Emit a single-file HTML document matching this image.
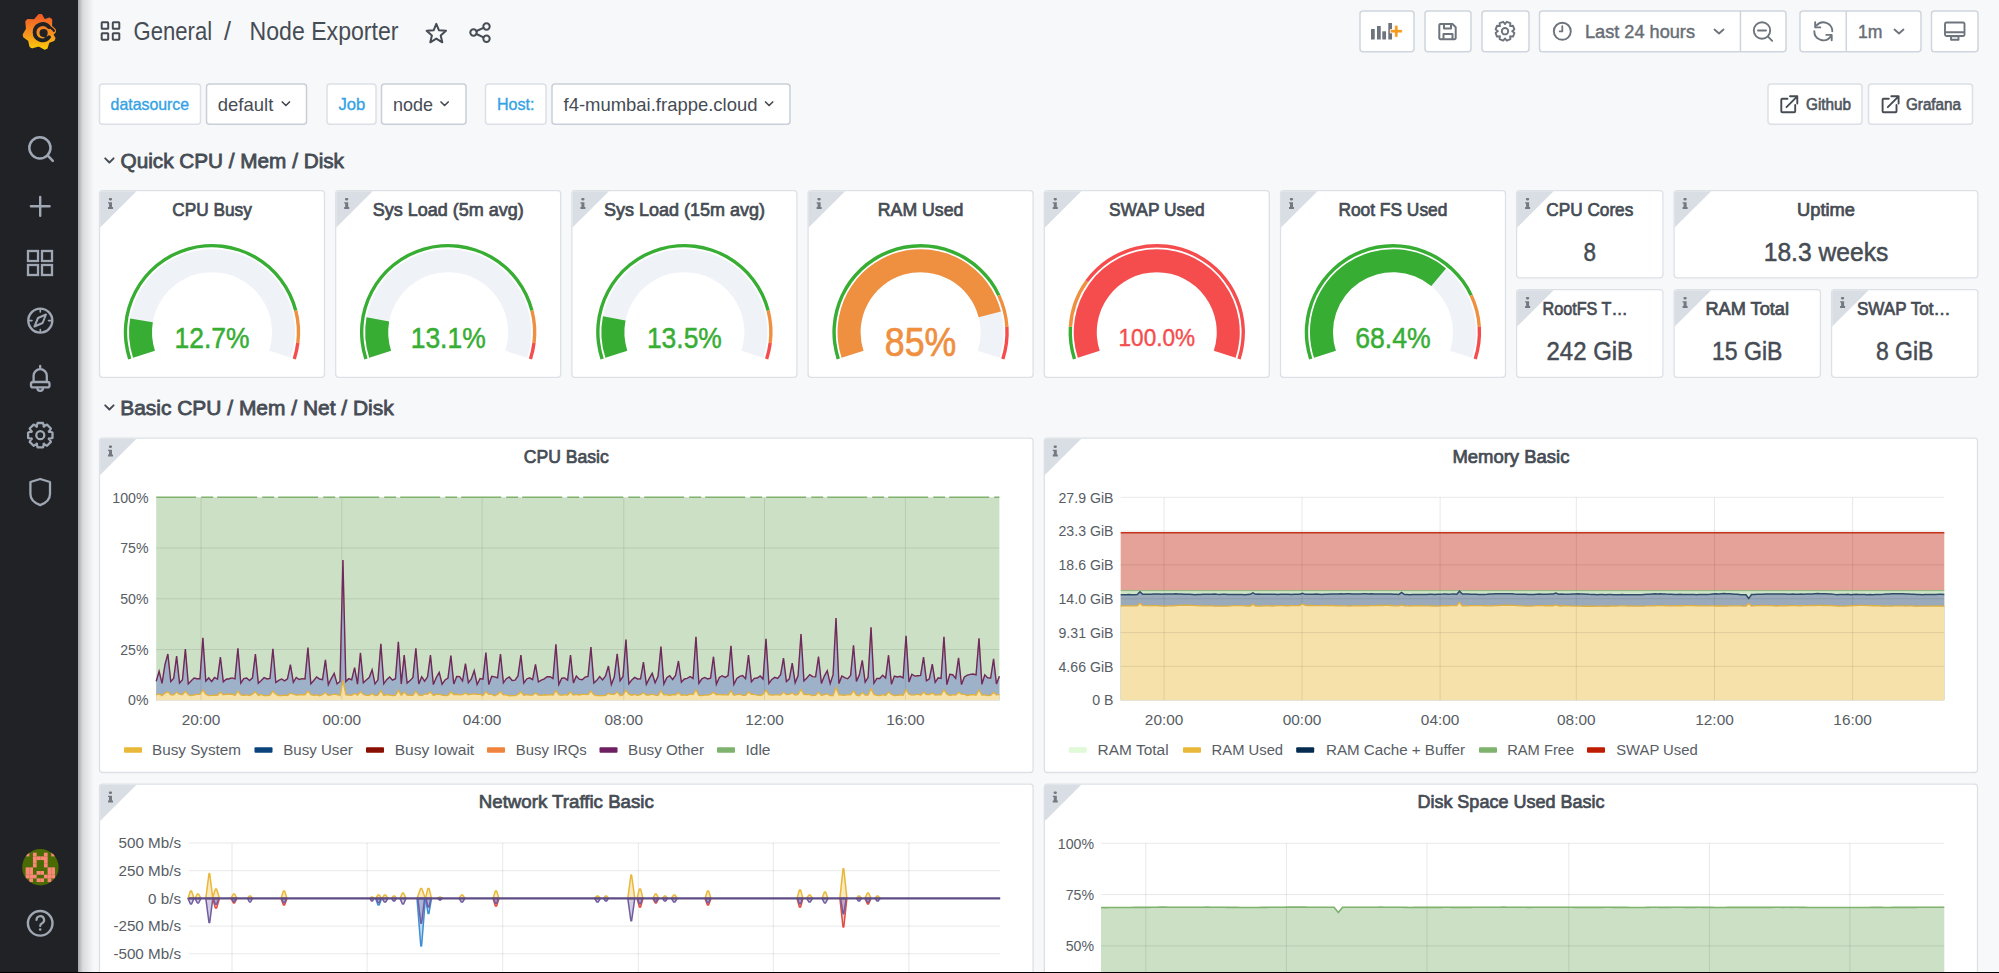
<!DOCTYPE html><html><head><meta charset="utf-8"><style>
html,body{margin:0;padding:0;width:1999px;height:973px;overflow:hidden;background:#f7f8fa;}
svg{position:absolute;left:0;top:0;font-family:"Liberation Sans",sans-serif;}
text{font-family:"Liberation Sans",sans-serif;}
</style></head><body>
<svg width="1999" height="973" viewBox="0 0 1999 973">
<defs><linearGradient id="sh" x1="0" x2="1" y1="0" y2="0"><stop offset="0" stop-color="#000" stop-opacity="0.33"/><stop offset="0.3" stop-color="#000" stop-opacity="0.12"/><stop offset="1" stop-color="#000" stop-opacity="0"/></linearGradient><linearGradient id="logo" x1="0" x2="0" y1="0" y2="1"><stop offset="0" stop-color="#f05a28"/><stop offset="0.55" stop-color="#f7911e"/><stop offset="1" stop-color="#fbca0a"/></linearGradient></defs>
<rect x="0" y="0" width="78" height="973" fill="#202226"/>
<rect x="78" y="0" width="16" height="973" fill="url(#sh)"/>
<path d="M26.10 21.58 L27.75 19.80 L34.50 20.12 L39.04 14.74 L41.51 14.84 L44.31 19.96 L49.60 18.28 L51.47 19.81 L51.28 26.04 L54.96 29.57 L55.20 31.74 L52.72 34.57 L54.69 38.25 L53.73 40.29 L48.64 42.16 L46.82 48.04 L44.57 48.89 L38.57 45.66 L32.30 47.59 L30.25 46.43 L28.84 40.22 L23.96 36.80 L23.50 34.58 L26.78 28.84Z" fill="url(#logo)" stroke="url(#logo)" stroke-width="1.6" stroke-linejoin="round"/>
<path d="M48.90 26.99 A8.1 8.1 0 0 0 34.60 32.20 A8.1 8.1 0 0 0 49.08 37.19" fill="none" stroke="#202226" stroke-width="3.8" stroke-linecap="round"/>
<polyline points="48.90,26.99 49.59,27.22 50.27,27.52 50.94,27.89 51.60,28.33 52.23,28.85 52.83,29.44 53.40,30.10 53.92,30.82" fill="none" stroke="#202226" stroke-width="2.2" stroke-linecap="round"/>
<circle cx="43.6" cy="33.1" r="4.1" fill="#202226"/>
<path d="M44.5 35.5 L46.8 38.6" stroke="#202226" stroke-width="2.4" stroke-linecap="round"/>
<path d="M 29.3 147.8 a 10.6 10.6 0 1 0 21.2 0 a 10.6 10.6 0 1 0 -21.2 0 M 47.8 155.6 L 52.8 160.8" fill="none" stroke="#9fa7b3" stroke-width="2.5" stroke-linecap="round" stroke-linejoin="round" />
<path d="M 40.2 197 V 215.7 M 30.9 206.3 H 49.6" fill="none" stroke="#9fa7b3" stroke-width="2.4" stroke-linecap="round" stroke-linejoin="round" />
<rect x="28" y="251" width="10" height="10" fill="none" stroke="#9fa7b3" stroke-width="2.3"/>
<rect x="42" y="251" width="10" height="10" fill="none" stroke="#9fa7b3" stroke-width="2.3"/>
<rect x="28" y="265" width="10" height="10" fill="none" stroke="#9fa7b3" stroke-width="2.3"/>
<rect x="42" y="265" width="10" height="10" fill="none" stroke="#9fa7b3" stroke-width="2.3"/>
<circle cx="40.3" cy="320.6" r="12" fill="none" stroke="#9fa7b3" stroke-width="2.4"/>
<path d="M 46 314.5 L 42.6 323 L 34.5 326.5 L 38 318 Z" fill="none" stroke="#9fa7b3" stroke-width="2.0" stroke-linecap="round" stroke-linejoin="round" />
<path d="M 40.3 309.5 v2.5 M 40.3 329.5 v2.5 M 29.5 320.6 h2.5 M 48.5 320.6 h2.5" fill="none" stroke="#9fa7b3" stroke-width="1.6" stroke-linecap="round" stroke-linejoin="round" />
<path d="M 40.2 366 v1.8 M 33.6 382 V 375.8 a 6.6 6.6 0 0 1 13.2 0 V 382 M 37.4 388 a 2.8 2.8 0 0 0 5.6 0" fill="none" stroke="#9fa7b3" stroke-width="2.3" stroke-linecap="round" stroke-linejoin="round" />
<rect x="31" y="382" width="18.5" height="5.4" rx="2" fill="none" stroke="#9fa7b3" stroke-width="2.3"/>
<path d="M52.5 432.5 L52.5 437.9 L48.8 439.0 L49.0 438.5 L50.9 441.9 L47.0 445.8 L43.6 443.9 L44.1 443.7 L43.0 447.4 L37.6 447.4 L36.5 443.7 L37.0 443.9 L33.6 445.8 L29.7 441.9 L31.6 438.5 L31.8 439.0 L28.1 437.9 L28.1 432.5 L31.8 431.4 L31.6 431.9 L29.7 428.5 L33.6 424.6 L37.0 426.5 L36.5 426.7 L37.6 423.0 L43.0 423.0 L44.1 426.7 L43.6 426.5 L47.0 424.6 L50.9 428.5 L49.0 431.9 L48.8 431.4Z" fill="none" stroke="#9fa7b3" stroke-width="2.3" stroke-linejoin="round"/>
<circle cx="40.3" cy="435.2" r="4" fill="none" stroke="#9fa7b3" stroke-width="2.3"/>
<path d="M 40.2 479 L 50 482 V 494 Q 50 501.5 40.2 505.2 Q 30.4 501.5 30.4 494 V 482 Z" fill="none" stroke="#9fa7b3" stroke-width="2.3" stroke-linecap="round" stroke-linejoin="round" />
<clipPath id="avc"><circle cx="40.4" cy="867.2" r="18.2"/></clipPath>
<g clip-path="url(#avc)"><rect x="21" y="848" width="38" height="38" fill="#4a6a04"/>
<rect x="25.61" y="852.69" width="3.72" height="3.72" fill="#fa8878"/>
<rect x="32.94" y="852.69" width="3.72" height="3.72" fill="#fa8878"/>
<rect x="43.95" y="852.69" width="3.72" height="3.72" fill="#fa8878"/>
<rect x="51.28" y="852.69" width="3.72" height="3.72" fill="#fa8878"/>
<rect x="32.94" y="856.36" width="3.72" height="3.72" fill="#fa8878"/>
<rect x="36.61" y="856.36" width="3.72" height="3.72" fill="#fa8878"/>
<rect x="40.28" y="856.36" width="3.72" height="3.72" fill="#fa8878"/>
<rect x="43.95" y="856.36" width="3.72" height="3.72" fill="#fa8878"/>
<rect x="32.94" y="860.02" width="3.72" height="3.72" fill="#fa8878"/>
<rect x="43.95" y="860.02" width="3.72" height="3.72" fill="#fa8878"/>
<rect x="32.94" y="863.69" width="3.72" height="3.72" fill="#fa8878"/>
<rect x="43.95" y="863.69" width="3.72" height="3.72" fill="#fa8878"/>
<rect x="25.61" y="867.36" width="3.72" height="3.72" fill="#fa8878"/>
<rect x="29.28" y="867.36" width="3.72" height="3.72" fill="#fa8878"/>
<rect x="47.62" y="867.36" width="3.72" height="3.72" fill="#fa8878"/>
<rect x="51.28" y="867.36" width="3.72" height="3.72" fill="#fa8878"/>
<rect x="25.61" y="871.03" width="3.72" height="3.72" fill="#fa8878"/>
<rect x="29.28" y="871.03" width="3.72" height="3.72" fill="#fa8878"/>
<rect x="36.61" y="871.03" width="3.72" height="3.72" fill="#fa8878"/>
<rect x="40.28" y="871.03" width="3.72" height="3.72" fill="#fa8878"/>
<rect x="47.62" y="871.03" width="3.72" height="3.72" fill="#fa8878"/>
<rect x="51.28" y="871.03" width="3.72" height="3.72" fill="#fa8878"/>
<rect x="25.61" y="874.69" width="3.72" height="3.72" fill="#fa8878"/>
<rect x="29.28" y="874.69" width="3.72" height="3.72" fill="#fa8878"/>
<rect x="32.94" y="874.69" width="3.72" height="3.72" fill="#fa8878"/>
<rect x="43.95" y="874.69" width="3.72" height="3.72" fill="#fa8878"/>
<rect x="47.62" y="874.69" width="3.72" height="3.72" fill="#fa8878"/>
<rect x="51.28" y="874.69" width="3.72" height="3.72" fill="#fa8878"/>
<rect x="29.28" y="878.36" width="3.72" height="3.72" fill="#fa8878"/>
<rect x="36.61" y="878.36" width="3.72" height="3.72" fill="#fa8878"/>
<rect x="40.28" y="878.36" width="3.72" height="3.72" fill="#fa8878"/>
<rect x="47.62" y="878.36" width="3.72" height="3.72" fill="#fa8878"/>
</g>
<circle cx="40.2" cy="923.3" r="12.3" fill="none" stroke="#9fa7b3" stroke-width="2.4"/>
<path d="M 36.5 920 a 3.8 3.8 0 1 1 5.6 3.3 q -1.9 1 -1.9 2.7" fill="none" stroke="#9fa7b3" stroke-width="2.2" stroke-linecap="round" stroke-linejoin="round" />
<circle cx="40.2" cy="929.5" r="1.3" fill="#9fa7b3"/>
<rect x="101.7" y="22.3" width="6.5" height="6.5" rx="0.6" fill="none" stroke="#464c54" stroke-width="2"/>
<rect x="112.8" y="22.3" width="6.5" height="6.5" rx="0.6" fill="none" stroke="#464c54" stroke-width="2"/>
<rect x="101.7" y="33.2" width="6.5" height="6.5" rx="0.6" fill="none" stroke="#464c54" stroke-width="2"/>
<rect x="112.8" y="33.2" width="6.5" height="6.5" rx="0.6" fill="none" stroke="#464c54" stroke-width="2"/>
<text x="133.6" y="40" font-size="25.2" font-weight="normal" fill="#464c54" text-anchor="start" textLength="78.5" lengthAdjust="spacingAndGlyphs" >General</text>
<text x="224" y="40" font-size="25.2" font-weight="normal" fill="#464c54" text-anchor="start" >/</text>
<text x="249.5" y="40" font-size="25.2" font-weight="normal" fill="#464c54" text-anchor="start" textLength="149" lengthAdjust="spacingAndGlyphs" >Node Exporter</text>
<path d="M436.3 23.8 L439.0 30.3 L446.0 30.8 L440.7 35.4 L442.3 42.3 L436.3 38.6 L430.3 42.3 L431.9 35.4 L426.6 30.8 L433.6 30.3Z" fill="none" stroke="#464c54" stroke-width="2" stroke-linejoin="round"/>
<circle cx="486.5" cy="26.5" r="3.2" fill="none" stroke="#464c54" stroke-width="2"/>
<circle cx="473.5" cy="32.5" r="3.2" fill="none" stroke="#464c54" stroke-width="2"/>
<circle cx="486.5" cy="38.8" r="3.2" fill="none" stroke="#464c54" stroke-width="2"/>
<path d="M 476.5 31 L 483.5 27.8 M 476.5 34 L 483.5 37.4" fill="none" stroke="#464c54" stroke-width="2" stroke-linecap="round" stroke-linejoin="round" />
<rect x="1360" y="11" width="54" height="40.8" rx="3" fill="#fff" stroke="#cfd5de" stroke-width="1.5"/>
<rect x="1425" y="11" width="46" height="40.8" rx="3" fill="#fff" stroke="#cfd5de" stroke-width="1.5"/>
<rect x="1482" y="11" width="47" height="40.8" rx="3" fill="#fff" stroke="#cfd5de" stroke-width="1.5"/>
<rect x="1539.5" y="11" width="246.5" height="40.8" rx="3" fill="#fff" stroke="#cfd5de" stroke-width="1.5"/>
<rect x="1800" y="11" width="121" height="40.8" rx="3" fill="#fff" stroke="#cfd5de" stroke-width="1.5"/>
<rect x="1931.5" y="11" width="46.5" height="40.8" rx="3" fill="#fff" stroke="#cfd5de" stroke-width="1.5"/>
<rect x="1739.7" y="11" width="1.5" height="40.8" fill="#cfd5de"/>
<rect x="1845.5" y="11" width="1.5" height="40.8" fill="#cfd5de"/>
<rect x="1371" y="29.0" width="3.75" height="10.5" fill="#6e747d"/>
<rect x="1377" y="26.0" width="3.75" height="13.5" fill="#6e747d"/>
<rect x="1382.3" y="31.3" width="3.75" height="8.2" fill="#6e747d"/>
<rect x="1388.3" y="23.0" width="3.75" height="16.5" fill="#6e747d"/>
<path d="M1390.3 29.5 h4.3 v-4.3 h3.4 v4.3 h4.3 v3.4 h-4.3 v4.3 h-3.4 v-4.3 h-4.3 z" fill="#f59a1b" stroke="#fff" stroke-width="0.8"/>
<path d="M 1440.5 24 h12 l 3.2 3.2 v 10.8 a1.2 1.2 0 0 1 -1.2 1.2 h-14 a1.2 1.2 0 0 1 -1.2 -1.2 v-12.8 a1.2 1.2 0 0 1 1.2 -1.2 z M 1444 24 v4.5 h7 v-4.5 M 1443.5 39 v-5 h9 v5" fill="none" stroke="#6e747d" stroke-width="2" stroke-linecap="round" stroke-linejoin="round" />
<path d="M1514.4 33.0 L1513.0 36.6 L1510.1 36.3 L1510.1 36.3 L1510.4 39.2 L1506.8 40.6 L1504.9 38.4 L1505.1 38.4 L1503.2 40.6 L1499.6 39.2 L1499.9 36.3 L1499.9 36.3 L1497.0 36.6 L1495.6 33.0 L1497.8 31.1 L1497.8 31.3 L1495.6 29.4 L1497.0 25.8 L1499.9 26.1 L1499.9 26.1 L1499.6 23.2 L1503.2 21.8 L1505.1 24.0 L1504.9 24.0 L1506.8 21.8 L1510.4 23.2 L1510.1 26.1 L1510.1 26.1 L1513.0 25.8 L1514.4 29.4 L1512.2 31.3 L1512.2 31.1Z" fill="none" stroke="#6e747d" stroke-width="1.9" stroke-linejoin="round"/>
<circle cx="1505" cy="31.2" r="3.2" fill="none" stroke="#6e747d" stroke-width="1.9"/>
<circle cx="1562.3" cy="31.3" r="8.5" fill="none" stroke="#6e747d" stroke-width="1.9"/>
<path d="M 1562.3 26.2 v 5.2 h -2.6" fill="none" stroke="#6e747d" stroke-width="1.8" stroke-linecap="round" stroke-linejoin="round" />
<text x="1585" y="37.9" font-size="18.8" font-weight="normal" fill="#686e76" text-anchor="start" textLength="110" lengthAdjust="spacingAndGlyphs"  stroke="#686e76" stroke-width="0.45">Last 24 hours</text>
<path d="M 1714.5 29.5 l 4.5 4 l 4.5 -4" fill="none" stroke="#6e747d" stroke-width="1.8" stroke-linecap="round" stroke-linejoin="round" />
<circle cx="1762" cy="30.5" r="8.2" fill="none" stroke="#6e747d" stroke-width="1.9"/>
<path d="M 1758 30.5 h 8 M 1768 36.6 l 4.2 4.2" fill="none" stroke="#6e747d" stroke-width="1.9" stroke-linecap="round" stroke-linejoin="round" />
<path d="M 1816.6 25.3 A 9 9 0 0 1 1832.3 31.2 M 1814.3 31.2 A 9 9 0 0 0 1830.8 36.2" fill="none" stroke="#6e747d" stroke-width="1.9" stroke-linecap="round" stroke-linejoin="round" />
<path d="M 1815.2 22.3 V 27.4 H 1820.3 M 1826.3 34.9 H 1831.7 V 40.3" fill="none" stroke="#6e747d" stroke-width="1.9" stroke-linecap="round" stroke-linejoin="round" />
<text x="1858" y="37.9" font-size="18.8" font-weight="normal" fill="#686e76" text-anchor="start" textLength="24.5" lengthAdjust="spacingAndGlyphs"  stroke="#686e76" stroke-width="0.45">1m</text>
<path d="M 1894.5 29.5 l 4.5 4 l 4.5 -4" fill="none" stroke="#6e747d" stroke-width="1.8" stroke-linecap="round" stroke-linejoin="round" />
<path d="M 1946.5 22.5 h 16.5 a1.5 1.5 0 0 1 1.5 1.5 v 10.5 a1.5 1.5 0 0 1 -1.5 1.5 h-16.5 a1.5 1.5 0 0 1 -1.5 -1.5 v-10.5 a1.5 1.5 0 0 1 1.5 -1.5 z M 1945.5 32.2 h 18.5 M 1951 39.7 h 7.5 v-3.5 h-7.5 z" fill="none" stroke="#6e747d" stroke-width="1.9" stroke-linecap="round" stroke-linejoin="round" />
<rect x="99.5" y="84" width="101.0" height="40.2" rx="3" fill="#fff" stroke="#dce0e6" stroke-width="1.5"/>
<rect x="206.5" y="84" width="100.0" height="40.2" rx="3" fill="#fff" stroke="#c9cfd8" stroke-width="1.5"/>
<rect x="327" y="84" width="49" height="40.2" rx="3" fill="#fff" stroke="#dce0e6" stroke-width="1.5"/>
<rect x="381.5" y="84" width="84.5" height="40.2" rx="3" fill="#fff" stroke="#c9cfd8" stroke-width="1.5"/>
<rect x="485.5" y="84" width="60.5" height="40.2" rx="3" fill="#fff" stroke="#dce0e6" stroke-width="1.5"/>
<rect x="552" y="84" width="238" height="40.2" rx="3" fill="#fff" stroke="#c9cfd8" stroke-width="1.5"/>
<text x="110.6" y="110" font-size="16.5" font-weight="normal" fill="#33a2e5" text-anchor="start" textLength="78.5" lengthAdjust="spacingAndGlyphs"  stroke="#33a2e5" stroke-width="0.35">datasource</text>
<text x="217.8" y="110.5" font-size="19" font-weight="normal" fill="#464c54" text-anchor="start" textLength="55.5" lengthAdjust="spacingAndGlyphs" >default</text>
<path d="M 282.3 102 l 3.6 3.5 l 3.6 -3.5" fill="none" stroke="#464c54" stroke-width="1.7" stroke-linecap="round" stroke-linejoin="round" />
<text x="338.5" y="110" font-size="16.5" font-weight="normal" fill="#33a2e5" text-anchor="start" textLength="26.8" lengthAdjust="spacingAndGlyphs"  stroke="#33a2e5" stroke-width="0.35">Job</text>
<text x="393" y="110.5" font-size="19" font-weight="normal" fill="#464c54" text-anchor="start" textLength="40" lengthAdjust="spacingAndGlyphs" >node</text>
<path d="M 441 102 l 3.6 3.5 l 3.6 -3.5" fill="none" stroke="#464c54" stroke-width="1.7" stroke-linecap="round" stroke-linejoin="round" />
<text x="497" y="110" font-size="16.5" font-weight="normal" fill="#33a2e5" text-anchor="start" textLength="37.5" lengthAdjust="spacingAndGlyphs"  stroke="#33a2e5" stroke-width="0.35">Host:</text>
<text x="563.5" y="110.5" font-size="19" font-weight="normal" fill="#464c54" text-anchor="start" textLength="194" lengthAdjust="spacingAndGlyphs" >f4-mumbai.frappe.cloud</text>
<path d="M 765.5 102 l 3.6 3.5 l 3.6 -3.5" fill="none" stroke="#464c54" stroke-width="1.7" stroke-linecap="round" stroke-linejoin="round" />
<rect x="1768" y="84" width="94" height="40.2" rx="3" fill="#fff" stroke="#dce0e6" stroke-width="1.5"/>
<rect x="1868.5" y="84" width="104.0" height="40.2" rx="3" fill="#fff" stroke="#dce0e6" stroke-width="1.5"/>
<path d="M 1787.5 98.8 H 1782.3 a1 1 0 0 0 -1 1 V 111.3 a1 1 0 0 0 1 1 H 1794.2 a1 1 0 0 0 1 -1 V 105 M 1786.5 107.2 L 1797.0 96.7 M 1790.0 96.3 H 1797.3 V 103.5" fill="none" stroke="#464c54" stroke-width="1.9" stroke-linecap="round" stroke-linejoin="round" />
<path d="M 1888.8 98.8 H 1883.6 a1 1 0 0 0 -1 1 V 111.3 a1 1 0 0 0 1 1 H 1895.5 a1 1 0 0 0 1 -1 V 105 M 1887.8 107.2 L 1898.3 96.7 M 1891.3 96.3 H 1898.6 V 103.5" fill="none" stroke="#464c54" stroke-width="1.9" stroke-linecap="round" stroke-linejoin="round" />
<text x="1806" y="110" font-size="16.5" font-weight="normal" fill="#50565e" text-anchor="start" textLength="45" lengthAdjust="spacingAndGlyphs"  stroke="#50565e" stroke-width="0.64">Github</text>
<text x="1906" y="110" font-size="16.5" font-weight="normal" fill="#50565e" text-anchor="start" textLength="55" lengthAdjust="spacingAndGlyphs"  stroke="#50565e" stroke-width="0.64">Grafana</text>
<path d="M 105.2 158.3 l 4.2 4.2 l 4.2 -4.2" fill="none" stroke="#464c54" stroke-width="1.9" stroke-linecap="round" stroke-linejoin="round" />
<text x="120.5" y="167.5" font-size="20.6" font-weight="normal" fill="#464c54" text-anchor="start" textLength="223.5" lengthAdjust="spacingAndGlyphs"  stroke="#464c54" stroke-width="0.80">Quick CPU / Mem / Disk</text>
<path d="M 105.2 405.3 l 4.2 4.2 l 4.2 -4.2" fill="none" stroke="#464c54" stroke-width="1.9" stroke-linecap="round" stroke-linejoin="round" />
<text x="120.2" y="414.5" font-size="20.6" font-weight="normal" fill="#464c54" text-anchor="start" textLength="273.5" lengthAdjust="spacingAndGlyphs"  stroke="#464c54" stroke-width="0.80">Basic CPU / Mem / Net / Disk</text>
<rect x="99.5" y="190.7" width="225.0" height="186.6" rx="3" fill="#fff" stroke="#dde1e6" stroke-width="1.3"/>
<path d="M100.1 194.0 Q100.1 191.3 103.0 191.3 L136.5 191.3 L100.1 227.5 Z" fill="#d9dee5"/>
<rect x="108.8" y="198.0" width="3.3" height="2.4" rx="1.1" fill="#737881"/>
<path d="M108.0 202.2 H112.0 V206.9 H113.0 V208.9 H108.0 V206.9 H109.0 V203.5 H108.0 Z" fill="#737881"/>
<text x="212.0" y="215.8" font-size="18.4" font-weight="normal" fill="#464c54" text-anchor="middle" textLength="79.5" lengthAdjust="spacingAndGlyphs"  stroke="#464c54" stroke-width="0.72">CPU Busy</text>
<path d="M133.06 357.85 A83.0 83.0 0 1 1 290.93 357.85 L269.06 350.74 A60 60 0 1 0 154.93 350.74 Z" fill="#eff2f7"/>
<path d="M133.06 357.85 A83.0 83.0 0 0 1 130.12 318.60 L152.81 322.37 A60 60 0 0 0 154.93 350.74 Z" fill="#37ae33"/>
<path d="M128.11 359.46 A88.2 88.2 0 1 1 297.42 310.27 L294.13 311.11 A84.8 84.8 0 1 0 131.35 358.40 Z" fill="#37ae33"/>
<path d="M297.42 310.27 A88.2 88.2 0 0 1 299.50 343.25 L296.13 342.83 A84.8 84.8 0 0 0 294.13 311.11 Z" fill="#ef8f40"/>
<path d="M299.50 343.25 A88.2 88.2 0 0 1 295.88 359.46 L292.64 358.40 A84.8 84.8 0 0 0 296.13 342.83 Z" fill="#f54d4d"/>
<text x="212.0" y="348.0" font-size="29" font-weight="normal" fill="#37ae33" text-anchor="middle" textLength="75" lengthAdjust="spacingAndGlyphs"  stroke="#37ae33" stroke-width="0.50">12.7%</text>
<rect x="335.7" y="190.7" width="225.0" height="186.6" rx="3" fill="#fff" stroke="#dde1e6" stroke-width="1.3"/>
<path d="M336.3 194.0 Q336.3 191.3 339.2 191.3 L372.7 191.3 L336.3 227.5 Z" fill="#d9dee5"/>
<rect x="345.0" y="198.0" width="3.3" height="2.4" rx="1.1" fill="#737881"/>
<path d="M344.2 202.2 H348.2 V206.9 H349.2 V208.9 H344.2 V206.9 H345.2 V203.5 H344.2 Z" fill="#737881"/>
<text x="448.2" y="215.8" font-size="18.4" font-weight="normal" fill="#464c54" text-anchor="middle" textLength="151" lengthAdjust="spacingAndGlyphs"  stroke="#464c54" stroke-width="0.72">Sys Load (5m avg)</text>
<path d="M369.25 357.85 A83.0 83.0 0 1 1 527.12 357.85 L505.25 350.74 A60 60 0 1 0 391.12 350.74 Z" fill="#eff2f7"/>
<path d="M369.25 357.85 A83.0 83.0 0 0 1 366.52 317.37 L389.15 321.48 A60 60 0 0 0 391.12 350.74 Z" fill="#37ae33"/>
<path d="M364.30 359.46 A88.2 88.2 0 1 1 533.61 310.27 L530.32 311.11 A84.8 84.8 0 1 0 367.54 358.40 Z" fill="#37ae33"/>
<path d="M533.61 310.27 A88.2 88.2 0 0 1 535.69 343.25 L532.32 342.83 A84.8 84.8 0 0 0 530.32 311.11 Z" fill="#ef8f40"/>
<path d="M535.69 343.25 A88.2 88.2 0 0 1 532.07 359.46 L528.83 358.40 A84.8 84.8 0 0 0 532.32 342.83 Z" fill="#f54d4d"/>
<text x="448.2" y="348.0" font-size="29" font-weight="normal" fill="#37ae33" text-anchor="middle" textLength="75" lengthAdjust="spacingAndGlyphs"  stroke="#37ae33" stroke-width="0.50">13.1%</text>
<rect x="571.9" y="190.7" width="225.0" height="186.6" rx="3" fill="#fff" stroke="#dde1e6" stroke-width="1.3"/>
<path d="M572.5 194.0 Q572.5 191.3 575.4 191.3 L608.9 191.3 L572.5 227.5 Z" fill="#d9dee5"/>
<rect x="581.2" y="198.0" width="3.3" height="2.4" rx="1.1" fill="#737881"/>
<path d="M580.4 202.2 H584.4 V206.9 H585.4 V208.9 H580.4 V206.9 H581.4 V203.5 H580.4 Z" fill="#737881"/>
<text x="684.4" y="215.8" font-size="18.4" font-weight="normal" fill="#464c54" text-anchor="middle" textLength="161" lengthAdjust="spacingAndGlyphs"  stroke="#464c54" stroke-width="0.72">Sys Load (15m avg)</text>
<path d="M605.44 357.85 A83.0 83.0 0 1 1 763.31 357.85 L741.44 350.74 A60 60 0 1 0 627.31 350.74 Z" fill="#eff2f7"/>
<path d="M605.44 357.85 A83.0 83.0 0 0 1 602.94 316.14 L625.51 320.59 A60 60 0 0 0 627.31 350.74 Z" fill="#37ae33"/>
<path d="M600.49 359.46 A88.2 88.2 0 1 1 769.80 310.27 L766.51 311.11 A84.8 84.8 0 1 0 603.73 358.40 Z" fill="#37ae33"/>
<path d="M769.80 310.27 A88.2 88.2 0 0 1 771.88 343.25 L768.51 342.83 A84.8 84.8 0 0 0 766.51 311.11 Z" fill="#ef8f40"/>
<path d="M771.88 343.25 A88.2 88.2 0 0 1 768.26 359.46 L765.02 358.40 A84.8 84.8 0 0 0 768.51 342.83 Z" fill="#f54d4d"/>
<text x="684.4" y="348.0" font-size="29" font-weight="normal" fill="#37ae33" text-anchor="middle" textLength="75" lengthAdjust="spacingAndGlyphs"  stroke="#37ae33" stroke-width="0.50">13.5%</text>
<rect x="808.1" y="190.7" width="225.0" height="186.6" rx="3" fill="#fff" stroke="#dde1e6" stroke-width="1.3"/>
<path d="M808.7 194.0 Q808.7 191.3 811.6 191.3 L845.1 191.3 L808.7 227.5 Z" fill="#d9dee5"/>
<rect x="817.4" y="198.0" width="3.3" height="2.4" rx="1.1" fill="#737881"/>
<path d="M816.6 202.2 H820.6 V206.9 H821.6 V208.9 H816.6 V206.9 H817.6 V203.5 H816.6 Z" fill="#737881"/>
<text x="920.6" y="215.8" font-size="18.4" font-weight="normal" fill="#464c54" text-anchor="middle" textLength="85.5" lengthAdjust="spacingAndGlyphs"  stroke="#464c54" stroke-width="0.72">RAM Used</text>
<path d="M841.63 357.85 A83.0 83.0 0 1 1 999.50 357.85 L977.63 350.74 A60 60 0 1 0 863.50 350.74 Z" fill="#eff2f7"/>
<path d="M841.63 357.85 A83.0 83.0 0 1 1 1000.96 311.56 L978.68 317.28 A60 60 0 1 0 863.50 350.74 Z" fill="#ef8f40"/>
<path d="M836.68 359.46 A88.2 88.2 0 0 1 1000.37 294.65 L997.29 296.09 A84.8 84.8 0 0 0 839.92 358.40 Z" fill="#37ae33"/>
<path d="M1000.37 294.65 A88.2 88.2 0 0 1 1008.59 326.66 L1005.20 326.88 A84.8 84.8 0 0 0 997.29 296.09 Z" fill="#ef8f40"/>
<path d="M1008.59 326.66 A88.2 88.2 0 0 1 1004.45 359.46 L1001.21 358.40 A84.8 84.8 0 0 0 1005.20 326.88 Z" fill="#f54d4d"/>
<text x="920.6" y="356.0" font-size="41" font-weight="normal" fill="#ef8f40" text-anchor="middle" textLength="71.5" lengthAdjust="spacingAndGlyphs"  stroke="#ef8f40" stroke-width="0.71">85%</text>
<rect x="1044.3" y="190.7" width="225.0" height="186.6" rx="3" fill="#fff" stroke="#dde1e6" stroke-width="1.3"/>
<path d="M1044.9 194.0 Q1044.9 191.3 1047.8 191.3 L1081.3 191.3 L1044.9 227.5 Z" fill="#d9dee5"/>
<rect x="1053.6" y="198.0" width="3.3" height="2.4" rx="1.1" fill="#737881"/>
<path d="M1052.8 202.2 H1056.8 V206.9 H1057.8 V208.9 H1052.8 V206.9 H1053.8 V203.5 H1052.8 Z" fill="#737881"/>
<text x="1156.8" y="215.8" font-size="18.4" font-weight="normal" fill="#464c54" text-anchor="middle" textLength="95.5" lengthAdjust="spacingAndGlyphs"  stroke="#464c54" stroke-width="0.72">SWAP Used</text>
<path d="M1077.82 357.85 A83.0 83.0 0 1 1 1235.69 357.85 L1213.82 350.74 A60 60 0 1 0 1099.69 350.74 Z" fill="#eff2f7"/>
<path d="M1077.82 357.85 A83.0 83.0 0 1 1 1235.69 357.85 L1213.82 350.74 A60 60 0 1 0 1099.69 350.74 Z" fill="#f54d4d"/>
<path d="M1072.87 359.46 A88.2 88.2 0 0 1 1068.73 326.66 L1072.12 326.88 A84.8 84.8 0 0 0 1076.11 358.40 Z" fill="#37ae33"/>
<path d="M1068.73 326.66 A88.2 88.2 0 0 1 1085.40 280.36 L1088.15 282.36 A84.8 84.8 0 0 0 1072.12 326.88 Z" fill="#ef8f40"/>
<path d="M1085.40 280.36 A88.2 88.2 0 0 1 1240.64 359.46 L1237.40 358.40 A84.8 84.8 0 0 0 1088.15 282.36 Z" fill="#f54d4d"/>
<text x="1156.8" y="346.4" font-size="23.3" font-weight="normal" fill="#f54d4d" text-anchor="middle" textLength="76.5" lengthAdjust="spacingAndGlyphs"  stroke="#f54d4d" stroke-width="0.40">100.0%</text>
<rect x="1280.5" y="190.7" width="225.0" height="186.6" rx="3" fill="#fff" stroke="#dde1e6" stroke-width="1.3"/>
<path d="M1281.0 194.0 Q1281.0 191.3 1284.0 191.3 L1317.5 191.3 L1281.0 227.5 Z" fill="#d9dee5"/>
<rect x="1289.8" y="198.0" width="3.3" height="2.4" rx="1.1" fill="#737881"/>
<path d="M1289.0 202.2 H1293.0 V206.9 H1294.0 V208.9 H1289.0 V206.9 H1290.0 V203.5 H1289.0 Z" fill="#737881"/>
<text x="1392.9" y="215.8" font-size="18.4" font-weight="normal" fill="#464c54" text-anchor="middle" textLength="109" lengthAdjust="spacingAndGlyphs"  stroke="#464c54" stroke-width="0.72">Root FS Used</text>
<path d="M1314.01 357.85 A83.0 83.0 0 1 1 1471.88 357.85 L1450.01 350.74 A60 60 0 1 0 1335.88 350.74 Z" fill="#eff2f7"/>
<path d="M1314.01 357.85 A83.0 83.0 0 0 1 1446.01 268.38 L1431.31 286.07 A60 60 0 0 0 1335.88 350.74 Z" fill="#37ae33"/>
<path d="M1309.06 359.46 A88.2 88.2 0 0 1 1472.75 294.65 L1469.67 296.09 A84.8 84.8 0 0 0 1312.30 358.40 Z" fill="#37ae33"/>
<path d="M1472.75 294.65 A88.2 88.2 0 0 1 1480.97 326.66 L1477.58 326.88 A84.8 84.8 0 0 0 1469.67 296.09 Z" fill="#ef8f40"/>
<path d="M1480.97 326.66 A88.2 88.2 0 0 1 1476.83 359.46 L1473.59 358.40 A84.8 84.8 0 0 0 1477.58 326.88 Z" fill="#f54d4d"/>
<text x="1392.9" y="347.8" font-size="29" font-weight="normal" fill="#37ae33" text-anchor="middle" textLength="75.5" lengthAdjust="spacingAndGlyphs"  stroke="#37ae33" stroke-width="0.50">68.4%</text>
<rect x="1516.6" y="190.7" width="146.3" height="87.1" rx="3" fill="#fff" stroke="#dde1e6" stroke-width="1.3"/>
<path d="M1517.2 194.0 Q1517.2 191.3 1520.1 191.3 L1553.6 191.3 L1517.2 227.5 Z" fill="#d9dee5"/>
<rect x="1525.9" y="198.0" width="3.3" height="2.4" rx="1.1" fill="#737881"/>
<path d="M1525.1 202.2 H1529.1 V206.9 H1530.1 V208.9 H1525.1 V206.9 H1526.1 V203.5 H1525.1 Z" fill="#737881"/>
<text x="1589.8" y="215.8" font-size="18.4" font-weight="normal" fill="#464c54" text-anchor="middle" textLength="87" lengthAdjust="spacingAndGlyphs"  stroke="#464c54" stroke-width="0.72">CPU Cores</text>
<text x="1589.8" y="260.6" font-size="25.8" font-weight="normal" fill="#464c54" text-anchor="middle" textLength="12.5" lengthAdjust="spacingAndGlyphs"  stroke="#464c54" stroke-width="0.50">8</text>
<rect x="1674.1" y="190.7" width="303.7" height="87.1" rx="3" fill="#fff" stroke="#dde1e6" stroke-width="1.3"/>
<path d="M1674.7 194.0 Q1674.7 191.3 1677.6 191.3 L1711.1 191.3 L1674.7 227.5 Z" fill="#d9dee5"/>
<rect x="1683.4" y="198.0" width="3.3" height="2.4" rx="1.1" fill="#737881"/>
<path d="M1682.6 202.2 H1686.6 V206.9 H1687.6 V208.9 H1682.6 V206.9 H1683.6 V203.5 H1682.6 Z" fill="#737881"/>
<text x="1826.0" y="215.8" font-size="18.4" font-weight="normal" fill="#464c54" text-anchor="middle" textLength="58" lengthAdjust="spacingAndGlyphs"  stroke="#464c54" stroke-width="0.72">Uptime</text>
<text x="1826.0" y="260.6" font-size="25.8" font-weight="normal" fill="#464c54" text-anchor="middle" textLength="124.5" lengthAdjust="spacingAndGlyphs"  stroke="#464c54" stroke-width="0.50">18.3 weeks</text>
<rect x="1516.6" y="289.7" width="146.3" height="87.6" rx="3" fill="#fff" stroke="#dde1e6" stroke-width="1.3"/>
<path d="M1517.2 293.0 Q1517.2 290.3 1520.1 290.3 L1553.6 290.3 L1517.2 326.5 Z" fill="#d9dee5"/>
<rect x="1525.9" y="297.0" width="3.3" height="2.4" rx="1.1" fill="#737881"/>
<path d="M1525.1 301.2 H1529.1 V305.9 H1530.1 V307.9 H1525.1 V305.9 H1526.1 V302.5 H1525.1 Z" fill="#737881"/>
<text x="1585.1" y="314.8" font-size="18.4" font-weight="normal" fill="#464c54" text-anchor="middle" textLength="85" lengthAdjust="spacingAndGlyphs"  stroke="#464c54" stroke-width="0.72">RootFS T…</text>
<text x="1589.8" y="359.6" font-size="25.8" font-weight="normal" fill="#464c54" text-anchor="middle" textLength="86.5" lengthAdjust="spacingAndGlyphs"  stroke="#464c54" stroke-width="0.50">242 GiB</text>
<rect x="1674.1" y="289.7" width="146.3" height="87.6" rx="3" fill="#fff" stroke="#dde1e6" stroke-width="1.3"/>
<path d="M1674.7 293.0 Q1674.7 290.3 1677.6 290.3 L1711.1 290.3 L1674.7 326.5 Z" fill="#d9dee5"/>
<rect x="1683.4" y="297.0" width="3.3" height="2.4" rx="1.1" fill="#737881"/>
<path d="M1682.6 301.2 H1686.6 V305.9 H1687.6 V307.9 H1682.6 V305.9 H1683.6 V302.5 H1682.6 Z" fill="#737881"/>
<text x="1747.2" y="314.8" font-size="18.4" font-weight="normal" fill="#464c54" text-anchor="middle" textLength="83.5" lengthAdjust="spacingAndGlyphs"  stroke="#464c54" stroke-width="0.72">RAM Total</text>
<text x="1747.2" y="359.6" font-size="25.8" font-weight="normal" fill="#464c54" text-anchor="middle" textLength="70.5" lengthAdjust="spacingAndGlyphs"  stroke="#464c54" stroke-width="0.50">15 GiB</text>
<rect x="1831.6" y="289.7" width="146.3" height="87.6" rx="3" fill="#fff" stroke="#dde1e6" stroke-width="1.3"/>
<path d="M1832.2 293.0 Q1832.2 290.3 1835.1 290.3 L1868.6 290.3 L1832.2 326.5 Z" fill="#d9dee5"/>
<rect x="1840.9" y="297.0" width="3.3" height="2.4" rx="1.1" fill="#737881"/>
<path d="M1840.1 301.2 H1844.1 V305.9 H1845.1 V307.9 H1840.1 V305.9 H1841.1 V302.5 H1840.1 Z" fill="#737881"/>
<text x="1903.7" y="314.8" font-size="18.4" font-weight="normal" fill="#464c54" text-anchor="middle" textLength="93.5" lengthAdjust="spacingAndGlyphs"  stroke="#464c54" stroke-width="0.72">SWAP Tot…</text>
<text x="1904.7" y="359.6" font-size="25.8" font-weight="normal" fill="#464c54" text-anchor="middle" textLength="57.5" lengthAdjust="spacingAndGlyphs"  stroke="#464c54" stroke-width="0.50">8 GiB</text>
<rect x="99.5" y="438.2" width="933.6" height="334.3" rx="3" fill="#fff" stroke="#dde1e6" stroke-width="1.3"/>
<path d="M100.1 441.5 Q100.1 438.8 103.0 438.8 L136.5 438.8 L100.1 475.0 Z" fill="#d9dee5"/>
<rect x="108.8" y="445.5" width="3.3" height="2.4" rx="1.1" fill="#737881"/>
<path d="M108.0 449.7 H112.0 V454.4 H113.0 V456.4 H108.0 V454.4 H109.0 V451.0 H108.0 Z" fill="#737881"/>
<rect x="1044.3" y="438.2" width="933.2" height="334.3" rx="3" fill="#fff" stroke="#dde1e6" stroke-width="1.3"/>
<path d="M1044.9 441.5 Q1044.9 438.8 1047.8 438.8 L1081.3 438.8 L1044.9 475.0 Z" fill="#d9dee5"/>
<rect x="1053.6" y="445.5" width="3.3" height="2.4" rx="1.1" fill="#737881"/>
<path d="M1052.8 449.7 H1056.8 V454.4 H1057.8 V456.4 H1052.8 V454.4 H1053.8 V451.0 H1052.8 Z" fill="#737881"/>
<rect x="99.5" y="784.2" width="933.6" height="215.8" rx="3" fill="#fff" stroke="#dde1e6" stroke-width="1.3"/>
<path d="M100.1 787.5 Q100.1 784.8 103.0 784.8 L136.5 784.8 L100.1 821.0 Z" fill="#d9dee5"/>
<rect x="108.8" y="791.5" width="3.3" height="2.4" rx="1.1" fill="#737881"/>
<path d="M108.0 795.7 H112.0 V800.4 H113.0 V802.4 H108.0 V800.4 H109.0 V797.0 H108.0 Z" fill="#737881"/>
<rect x="1044.3" y="784.2" width="933.2" height="215.8" rx="3" fill="#fff" stroke="#dde1e6" stroke-width="1.3"/>
<path d="M1044.9 787.5 Q1044.9 784.8 1047.8 784.8 L1081.3 784.8 L1044.9 821.0 Z" fill="#d9dee5"/>
<rect x="1053.6" y="791.5" width="3.3" height="2.4" rx="1.1" fill="#737881"/>
<path d="M1052.8 795.7 H1056.8 V800.4 H1057.8 V802.4 H1052.8 V800.4 H1053.8 V797.0 H1052.8 Z" fill="#737881"/>
<text x="566.3" y="462.9" font-size="18.4" font-weight="normal" fill="#464c54" text-anchor="middle" textLength="85" lengthAdjust="spacingAndGlyphs"  stroke="#464c54" stroke-width="0.72">CPU Basic</text>
<text x="1510.9" y="462.9" font-size="18.4" font-weight="normal" fill="#464c54" text-anchor="middle" textLength="117" lengthAdjust="spacingAndGlyphs"  stroke="#464c54" stroke-width="0.72">Memory Basic</text>
<text x="566.3" y="808.4" font-size="18.4" font-weight="normal" fill="#464c54" text-anchor="middle" textLength="175" lengthAdjust="spacingAndGlyphs"  stroke="#464c54" stroke-width="0.72">Network Traffic Basic</text>
<text x="1510.9" y="808.4" font-size="18.4" font-weight="normal" fill="#464c54" text-anchor="middle" textLength="187" lengthAdjust="spacingAndGlyphs"  stroke="#464c54" stroke-width="0.72">Disk Space Used Basic</text>
<rect x="156.2" y="497.3" width="843.2" height="202.9" fill="#cbe0c5"/>
<polygon points="156.2,700.2 156.20,681.59 159.12,671.50 162.04,683.75 164.95,665.00 167.87,654.30 170.79,681.91 173.71,678.59 176.62,656.50 179.54,683.35 182.46,680.08 185.38,649.40 188.29,684.25 191.21,681.12 194.13,678.35 197.05,679.05 199.96,679.06 202.88,638.20 205.80,681.33 208.72,678.22 211.64,681.82 214.55,677.77 217.47,679.40 220.39,657.50 223.31,682.06 226.22,679.57 229.14,679.08 232.06,678.22 234.98,679.10 237.89,648.50 240.81,683.49 243.73,678.85 246.65,678.27 249.56,680.91 252.48,678.13 255.40,654.30 258.32,683.48 261.24,680.81 264.15,677.98 267.07,679.22 269.99,678.70 272.91,649.00 275.82,682.83 278.74,680.65 281.66,679.23 284.58,681.17 287.49,679.15 290.41,665.00 293.33,682.56 296.25,677.71 299.16,679.82 302.08,678.91 305.00,679.31 307.92,647.90 310.84,684.07 313.75,680.84 316.67,677.22 319.59,679.29 322.51,679.93 325.42,660.10 328.34,684.97 331.26,678.85 334.18,673.70 337.09,684.13 340.01,681.76 342.93,560.30 345.85,681.80 348.76,678.94 351.68,680.04 354.60,667.90 357.52,684.40 360.44,653.20 363.35,683.12 366.27,680.23 369.19,677.81 372.11,670.00 375.02,684.19 377.94,680.12 380.86,644.20 383.78,684.13 386.69,680.00 389.61,677.32 392.53,680.52 395.45,679.02 398.36,642.00 401.28,684.29 404.20,655.40 407.12,683.34 410.04,680.90 412.95,677.65 415.87,648.50 418.79,684.30 421.71,676.99 424.62,681.44 427.54,677.16 430.46,655.40 433.38,684.87 436.29,677.77 439.21,672.60 442.13,684.54 445.05,680.25 447.96,678.48 450.88,655.80 453.80,684.30 456.72,676.81 459.64,676.91 462.55,681.21 465.47,664.00 468.39,682.99 471.31,679.22 474.22,670.90 477.14,684.74 480.06,678.87 482.98,679.46 485.89,652.80 488.81,684.89 491.73,676.65 494.65,677.11 497.56,678.05 500.48,654.30 503.40,683.16 506.32,679.01 509.24,677.27 512.15,680.77 515.07,680.42 517.99,676.26 520.91,655.40 523.82,683.33 526.74,679.26 529.66,678.10 532.58,680.01 535.49,664.60 538.41,682.13 541.33,680.51 544.25,679.07 547.16,677.06 550.08,676.95 553.00,678.74 555.92,644.60 558.84,684.78 561.75,678.55 564.67,678.18 567.59,680.42 570.51,655.40 573.42,683.35 576.34,676.36 579.26,679.44 582.18,680.10 585.09,677.46 588.01,676.81 590.93,647.30 593.85,683.37 596.76,680.61 599.68,676.85 602.60,680.16 605.52,676.30 608.44,666.30 611.35,684.87 614.27,677.27 617.19,654.20 620.11,681.06 623.02,676.77 625.94,639.80 628.86,684.09 631.78,680.16 634.69,677.70 637.61,679.25 640.53,679.20 643.45,662.40 646.36,684.60 649.28,678.67 652.20,673.60 655.12,683.06 658.04,676.70 660.95,646.90 663.87,684.31 666.79,677.94 669.71,675.91 672.62,679.80 675.54,675.79 678.46,661.30 681.38,682.46 684.29,679.24 687.21,678.66 690.13,676.82 693.05,678.73 695.96,637.00 698.88,683.58 701.80,679.07 704.72,677.78 707.64,679.26 710.55,678.51 713.47,657.00 716.39,684.48 719.31,677.76 722.22,676.03 725.14,677.67 728.06,675.83 730.98,646.20 733.89,684.77 736.81,678.81 739.73,676.65 742.65,675.77 745.56,678.99 748.48,655.50 751.40,682.03 754.32,678.63 757.24,678.33 760.15,676.29 763.07,679.38 765.99,639.10 768.91,683.87 771.82,679.75 774.74,677.65 777.66,678.74 780.58,675.09 783.49,658.50 786.41,681.79 789.33,679.16 792.25,663.50 795.16,683.09 798.08,675.90 801.00,634.40 803.92,681.20 806.84,678.33 809.75,674.92 812.67,676.98 815.59,677.17 818.51,657.00 821.42,683.76 824.34,676.39 827.26,671.00 830.18,683.97 833.09,674.96 836.01,618.30 838.93,683.90 841.85,676.30 844.76,677.92 847.68,679.09 850.60,675.73 853.52,645.60 856.44,681.68 859.35,675.12 862.27,660.70 865.19,682.43 868.11,677.70 871.02,627.50 873.94,683.58 876.86,678.74 879.78,678.78 882.69,675.46 885.61,678.34 888.53,655.50 891.45,684.60 894.36,676.32 897.28,677.24 900.20,676.60 903.12,678.17 906.04,636.10 908.95,682.21 911.87,674.49 914.79,676.41 917.71,676.00 920.62,675.73 923.54,657.40 926.46,681.05 929.38,679.02 932.29,664.50 935.21,682.58 938.13,678.05 941.05,678.79 943.96,637.00 946.88,684.97 949.80,674.59 952.72,675.06 955.64,678.66 958.55,658.10 961.47,684.86 964.39,677.29 967.31,675.46 970.22,674.65 973.14,674.30 976.06,675.20 978.98,638.70 981.89,684.62 984.81,675.08 987.73,678.22 990.65,678.36 993.56,659.20 996.48,684.29 999.40,676.64 999.4,700.2" fill="#9db1c9"/>
<polygon points="156.2,700.2 156.20,694.85 159.12,693.92 162.04,695.63 164.95,693.14 167.87,691.85 170.79,694.97 173.71,694.96 176.62,692.12 179.54,694.33 182.46,694.53 185.38,691.26 188.29,694.78 191.21,695.69 194.13,694.97 197.05,694.31 199.96,694.24 202.88,689.92 205.80,694.22 208.72,695.58 211.64,695.38 214.55,695.03 217.47,695.25 220.39,692.24 223.31,694.79 226.22,694.27 229.14,694.23 232.06,694.13 234.98,695.47 237.89,691.16 240.81,694.81 243.73,695.39 246.65,694.81 249.56,695.63 252.48,694.13 255.40,691.85 258.32,695.49 261.24,694.49 264.15,695.66 267.07,695.66 269.99,695.20 272.91,691.22 275.82,694.12 278.74,695.61 281.66,695.69 284.58,695.07 287.49,695.48 290.41,693.14 293.33,694.18 296.25,695.12 299.16,694.89 302.08,694.77 305.00,694.73 307.92,691.08 310.84,694.57 313.75,695.25 316.67,694.89 319.59,695.72 322.51,694.79 325.42,692.55 328.34,695.64 331.26,694.98 334.18,694.18 337.09,694.54 340.01,695.64 342.93,680.57 345.85,695.00 348.76,695.22 351.68,695.23 354.60,693.48 357.52,695.12 360.44,691.72 363.35,694.54 366.27,695.37 369.19,695.35 372.11,693.74 375.02,695.57 377.94,695.19 380.86,690.64 383.78,695.46 386.69,694.68 389.61,695.00 392.53,695.54 395.45,695.43 398.36,690.38 401.28,695.28 404.20,691.98 407.12,695.18 410.04,695.26 412.95,695.30 415.87,691.16 418.79,695.07 421.71,695.48 424.62,694.21 427.54,694.13 430.46,691.98 433.38,695.38 436.29,694.38 439.21,694.05 442.13,695.18 445.05,695.63 447.96,695.27 450.88,692.03 453.80,694.61 456.72,694.28 459.64,694.80 462.55,694.53 465.47,693.02 468.39,694.88 471.31,694.21 474.22,693.84 477.14,694.34 480.06,694.47 482.98,695.42 485.89,691.67 488.81,694.45 491.73,694.43 494.65,695.72 497.56,694.34 500.48,691.85 503.40,694.88 506.32,694.97 509.24,695.73 512.15,695.53 515.07,695.63 517.99,694.35 520.91,691.98 523.82,695.23 526.74,694.69 529.66,695.15 532.58,695.20 535.49,693.09 538.41,695.12 541.33,695.45 544.25,694.76 547.16,695.12 550.08,694.73 553.00,695.13 555.92,690.69 558.84,694.61 561.75,695.34 564.67,694.61 567.59,695.05 570.51,691.98 573.42,695.13 576.34,694.45 579.26,694.98 582.18,694.42 585.09,694.30 588.01,694.65 590.93,691.01 593.85,694.78 596.76,695.50 599.68,695.66 602.60,695.58 605.52,695.45 608.44,693.29 611.35,694.37 614.27,694.38 617.19,691.84 620.11,695.68 623.02,694.91 625.94,690.11 628.86,694.22 631.78,695.21 634.69,694.39 637.61,695.44 640.53,694.74 643.45,692.82 646.36,695.09 649.28,695.06 652.20,694.17 655.12,695.07 658.04,695.48 660.95,690.96 663.87,694.90 666.79,694.69 669.71,695.49 672.62,694.52 675.54,694.90 678.46,692.69 681.38,695.30 684.29,694.79 687.21,695.36 690.13,694.19 693.05,694.59 695.96,689.78 698.88,695.30 701.80,695.70 704.72,695.11 707.64,695.15 710.55,694.48 713.47,692.18 716.39,694.76 719.31,694.38 722.22,694.83 725.14,694.57 728.06,695.09 730.98,690.88 733.89,695.36 736.81,694.57 739.73,694.18 742.65,695.34 745.56,695.32 748.48,692.00 751.40,694.28 754.32,694.33 757.24,695.05 760.15,695.60 763.07,694.38 765.99,690.03 768.91,694.64 771.82,695.19 774.74,694.95 777.66,694.79 780.58,695.10 783.49,692.36 786.41,694.66 789.33,694.30 792.25,692.96 795.16,695.13 798.08,694.51 801.00,689.46 803.92,694.43 806.84,694.51 809.75,694.64 812.67,695.55 815.59,695.16 818.51,692.18 821.42,695.44 824.34,694.71 827.26,693.86 830.18,695.54 833.09,695.51 836.01,687.53 838.93,694.84 841.85,694.99 844.76,695.45 847.68,694.57 850.60,694.85 853.52,690.81 856.44,695.11 859.35,695.67 862.27,692.62 865.19,695.16 868.11,695.08 871.02,688.64 873.94,694.36 876.86,695.30 879.78,695.55 882.69,694.56 885.61,695.43 888.53,692.00 891.45,694.52 894.36,695.50 897.28,695.42 900.20,694.81 903.12,695.33 906.04,689.67 908.95,694.29 911.87,695.11 914.79,694.79 917.71,694.15 920.62,695.25 923.54,692.22 926.46,694.56 929.38,694.49 932.29,693.08 935.21,694.99 938.13,694.88 941.05,694.92 943.96,689.78 946.88,694.18 949.80,695.52 952.72,694.72 955.64,695.15 958.55,692.31 961.47,694.23 964.39,694.32 967.31,695.52 970.22,694.76 973.14,694.57 976.06,695.18 978.98,689.98 981.89,695.03 984.81,694.95 987.73,695.67 990.65,695.41 993.56,692.44 996.48,694.86 999.40,694.68 999.4,700.2" fill="#f6e2ae"/>
<line x1="201" y1="497.3" x2="201" y2="700.2" stroke="rgba(0,0,0,0.09)" stroke-width="1"/>
<line x1="341.8" y1="497.3" x2="341.8" y2="700.2" stroke="rgba(0,0,0,0.09)" stroke-width="1"/>
<line x1="482.1" y1="497.3" x2="482.1" y2="700.2" stroke="rgba(0,0,0,0.09)" stroke-width="1"/>
<line x1="623.8" y1="497.3" x2="623.8" y2="700.2" stroke="rgba(0,0,0,0.09)" stroke-width="1"/>
<line x1="764.5" y1="497.3" x2="764.5" y2="700.2" stroke="rgba(0,0,0,0.09)" stroke-width="1"/>
<line x1="905.4" y1="497.3" x2="905.4" y2="700.2" stroke="rgba(0,0,0,0.09)" stroke-width="1"/>
<line x1="156.2" y1="649.5" x2="999.4" y2="649.5" stroke="rgba(0,0,0,0.09)" stroke-width="1"/>
<line x1="156.2" y1="598.8" x2="999.4" y2="598.8" stroke="rgba(0,0,0,0.09)" stroke-width="1"/>
<line x1="156.2" y1="548.0" x2="999.4" y2="548.0" stroke="rgba(0,0,0,0.09)" stroke-width="1"/>
<line x1="156.2" y1="497.3" x2="999.4" y2="497.3" stroke="#7eb26d" stroke-width="1.6" stroke-dasharray="40 5 12 4"/>
<polyline points="156.20,694.85 159.12,693.92 162.04,695.63 164.95,693.14 167.87,691.85 170.79,694.97 173.71,694.96 176.62,692.12 179.54,694.33 182.46,694.53 185.38,691.26 188.29,694.78 191.21,695.69 194.13,694.97 197.05,694.31 199.96,694.24 202.88,689.92 205.80,694.22 208.72,695.58 211.64,695.38 214.55,695.03 217.47,695.25 220.39,692.24 223.31,694.79 226.22,694.27 229.14,694.23 232.06,694.13 234.98,695.47 237.89,691.16 240.81,694.81 243.73,695.39 246.65,694.81 249.56,695.63 252.48,694.13 255.40,691.85 258.32,695.49 261.24,694.49 264.15,695.66 267.07,695.66 269.99,695.20 272.91,691.22 275.82,694.12 278.74,695.61 281.66,695.69 284.58,695.07 287.49,695.48 290.41,693.14 293.33,694.18 296.25,695.12 299.16,694.89 302.08,694.77 305.00,694.73 307.92,691.08 310.84,694.57 313.75,695.25 316.67,694.89 319.59,695.72 322.51,694.79 325.42,692.55 328.34,695.64 331.26,694.98 334.18,694.18 337.09,694.54 340.01,695.64 342.93,680.57 345.85,695.00 348.76,695.22 351.68,695.23 354.60,693.48 357.52,695.12 360.44,691.72 363.35,694.54 366.27,695.37 369.19,695.35 372.11,693.74 375.02,695.57 377.94,695.19 380.86,690.64 383.78,695.46 386.69,694.68 389.61,695.00 392.53,695.54 395.45,695.43 398.36,690.38 401.28,695.28 404.20,691.98 407.12,695.18 410.04,695.26 412.95,695.30 415.87,691.16 418.79,695.07 421.71,695.48 424.62,694.21 427.54,694.13 430.46,691.98 433.38,695.38 436.29,694.38 439.21,694.05 442.13,695.18 445.05,695.63 447.96,695.27 450.88,692.03 453.80,694.61 456.72,694.28 459.64,694.80 462.55,694.53 465.47,693.02 468.39,694.88 471.31,694.21 474.22,693.84 477.14,694.34 480.06,694.47 482.98,695.42 485.89,691.67 488.81,694.45 491.73,694.43 494.65,695.72 497.56,694.34 500.48,691.85 503.40,694.88 506.32,694.97 509.24,695.73 512.15,695.53 515.07,695.63 517.99,694.35 520.91,691.98 523.82,695.23 526.74,694.69 529.66,695.15 532.58,695.20 535.49,693.09 538.41,695.12 541.33,695.45 544.25,694.76 547.16,695.12 550.08,694.73 553.00,695.13 555.92,690.69 558.84,694.61 561.75,695.34 564.67,694.61 567.59,695.05 570.51,691.98 573.42,695.13 576.34,694.45 579.26,694.98 582.18,694.42 585.09,694.30 588.01,694.65 590.93,691.01 593.85,694.78 596.76,695.50 599.68,695.66 602.60,695.58 605.52,695.45 608.44,693.29 611.35,694.37 614.27,694.38 617.19,691.84 620.11,695.68 623.02,694.91 625.94,690.11 628.86,694.22 631.78,695.21 634.69,694.39 637.61,695.44 640.53,694.74 643.45,692.82 646.36,695.09 649.28,695.06 652.20,694.17 655.12,695.07 658.04,695.48 660.95,690.96 663.87,694.90 666.79,694.69 669.71,695.49 672.62,694.52 675.54,694.90 678.46,692.69 681.38,695.30 684.29,694.79 687.21,695.36 690.13,694.19 693.05,694.59 695.96,689.78 698.88,695.30 701.80,695.70 704.72,695.11 707.64,695.15 710.55,694.48 713.47,692.18 716.39,694.76 719.31,694.38 722.22,694.83 725.14,694.57 728.06,695.09 730.98,690.88 733.89,695.36 736.81,694.57 739.73,694.18 742.65,695.34 745.56,695.32 748.48,692.00 751.40,694.28 754.32,694.33 757.24,695.05 760.15,695.60 763.07,694.38 765.99,690.03 768.91,694.64 771.82,695.19 774.74,694.95 777.66,694.79 780.58,695.10 783.49,692.36 786.41,694.66 789.33,694.30 792.25,692.96 795.16,695.13 798.08,694.51 801.00,689.46 803.92,694.43 806.84,694.51 809.75,694.64 812.67,695.55 815.59,695.16 818.51,692.18 821.42,695.44 824.34,694.71 827.26,693.86 830.18,695.54 833.09,695.51 836.01,687.53 838.93,694.84 841.85,694.99 844.76,695.45 847.68,694.57 850.60,694.85 853.52,690.81 856.44,695.11 859.35,695.67 862.27,692.62 865.19,695.16 868.11,695.08 871.02,688.64 873.94,694.36 876.86,695.30 879.78,695.55 882.69,694.56 885.61,695.43 888.53,692.00 891.45,694.52 894.36,695.50 897.28,695.42 900.20,694.81 903.12,695.33 906.04,689.67 908.95,694.29 911.87,695.11 914.79,694.79 917.71,694.15 920.62,695.25 923.54,692.22 926.46,694.56 929.38,694.49 932.29,693.08 935.21,694.99 938.13,694.88 941.05,694.92 943.96,689.78 946.88,694.18 949.80,695.52 952.72,694.72 955.64,695.15 958.55,692.31 961.47,694.23 964.39,694.32 967.31,695.52 970.22,694.76 973.14,694.57 976.06,695.18 978.98,689.98 981.89,695.03 984.81,694.95 987.73,695.67 990.65,695.41 993.56,692.44 996.48,694.86 999.40,694.68" fill="none" stroke="#e3b23a" stroke-width="1.3"/>
<polyline points="156.20,681.59 159.12,671.50 162.04,683.75 164.95,665.00 167.87,654.30 170.79,681.91 173.71,678.59 176.62,656.50 179.54,683.35 182.46,680.08 185.38,649.40 188.29,684.25 191.21,681.12 194.13,678.35 197.05,679.05 199.96,679.06 202.88,638.20 205.80,681.33 208.72,678.22 211.64,681.82 214.55,677.77 217.47,679.40 220.39,657.50 223.31,682.06 226.22,679.57 229.14,679.08 232.06,678.22 234.98,679.10 237.89,648.50 240.81,683.49 243.73,678.85 246.65,678.27 249.56,680.91 252.48,678.13 255.40,654.30 258.32,683.48 261.24,680.81 264.15,677.98 267.07,679.22 269.99,678.70 272.91,649.00 275.82,682.83 278.74,680.65 281.66,679.23 284.58,681.17 287.49,679.15 290.41,665.00 293.33,682.56 296.25,677.71 299.16,679.82 302.08,678.91 305.00,679.31 307.92,647.90 310.84,684.07 313.75,680.84 316.67,677.22 319.59,679.29 322.51,679.93 325.42,660.10 328.34,684.97 331.26,678.85 334.18,673.70 337.09,684.13 340.01,681.76 342.93,560.30 345.85,681.80 348.76,678.94 351.68,680.04 354.60,667.90 357.52,684.40 360.44,653.20 363.35,683.12 366.27,680.23 369.19,677.81 372.11,670.00 375.02,684.19 377.94,680.12 380.86,644.20 383.78,684.13 386.69,680.00 389.61,677.32 392.53,680.52 395.45,679.02 398.36,642.00 401.28,684.29 404.20,655.40 407.12,683.34 410.04,680.90 412.95,677.65 415.87,648.50 418.79,684.30 421.71,676.99 424.62,681.44 427.54,677.16 430.46,655.40 433.38,684.87 436.29,677.77 439.21,672.60 442.13,684.54 445.05,680.25 447.96,678.48 450.88,655.80 453.80,684.30 456.72,676.81 459.64,676.91 462.55,681.21 465.47,664.00 468.39,682.99 471.31,679.22 474.22,670.90 477.14,684.74 480.06,678.87 482.98,679.46 485.89,652.80 488.81,684.89 491.73,676.65 494.65,677.11 497.56,678.05 500.48,654.30 503.40,683.16 506.32,679.01 509.24,677.27 512.15,680.77 515.07,680.42 517.99,676.26 520.91,655.40 523.82,683.33 526.74,679.26 529.66,678.10 532.58,680.01 535.49,664.60 538.41,682.13 541.33,680.51 544.25,679.07 547.16,677.06 550.08,676.95 553.00,678.74 555.92,644.60 558.84,684.78 561.75,678.55 564.67,678.18 567.59,680.42 570.51,655.40 573.42,683.35 576.34,676.36 579.26,679.44 582.18,680.10 585.09,677.46 588.01,676.81 590.93,647.30 593.85,683.37 596.76,680.61 599.68,676.85 602.60,680.16 605.52,676.30 608.44,666.30 611.35,684.87 614.27,677.27 617.19,654.20 620.11,681.06 623.02,676.77 625.94,639.80 628.86,684.09 631.78,680.16 634.69,677.70 637.61,679.25 640.53,679.20 643.45,662.40 646.36,684.60 649.28,678.67 652.20,673.60 655.12,683.06 658.04,676.70 660.95,646.90 663.87,684.31 666.79,677.94 669.71,675.91 672.62,679.80 675.54,675.79 678.46,661.30 681.38,682.46 684.29,679.24 687.21,678.66 690.13,676.82 693.05,678.73 695.96,637.00 698.88,683.58 701.80,679.07 704.72,677.78 707.64,679.26 710.55,678.51 713.47,657.00 716.39,684.48 719.31,677.76 722.22,676.03 725.14,677.67 728.06,675.83 730.98,646.20 733.89,684.77 736.81,678.81 739.73,676.65 742.65,675.77 745.56,678.99 748.48,655.50 751.40,682.03 754.32,678.63 757.24,678.33 760.15,676.29 763.07,679.38 765.99,639.10 768.91,683.87 771.82,679.75 774.74,677.65 777.66,678.74 780.58,675.09 783.49,658.50 786.41,681.79 789.33,679.16 792.25,663.50 795.16,683.09 798.08,675.90 801.00,634.40 803.92,681.20 806.84,678.33 809.75,674.92 812.67,676.98 815.59,677.17 818.51,657.00 821.42,683.76 824.34,676.39 827.26,671.00 830.18,683.97 833.09,674.96 836.01,618.30 838.93,683.90 841.85,676.30 844.76,677.92 847.68,679.09 850.60,675.73 853.52,645.60 856.44,681.68 859.35,675.12 862.27,660.70 865.19,682.43 868.11,677.70 871.02,627.50 873.94,683.58 876.86,678.74 879.78,678.78 882.69,675.46 885.61,678.34 888.53,655.50 891.45,684.60 894.36,676.32 897.28,677.24 900.20,676.60 903.12,678.17 906.04,636.10 908.95,682.21 911.87,674.49 914.79,676.41 917.71,676.00 920.62,675.73 923.54,657.40 926.46,681.05 929.38,679.02 932.29,664.50 935.21,682.58 938.13,678.05 941.05,678.79 943.96,637.00 946.88,684.97 949.80,674.59 952.72,675.06 955.64,678.66 958.55,658.10 961.47,684.86 964.39,677.29 967.31,675.46 970.22,674.65 973.14,674.30 976.06,675.20 978.98,638.70 981.89,684.62 984.81,675.08 987.73,678.22 990.65,678.36 993.56,659.20 996.48,684.29 999.40,676.64" fill="none" stroke="#e8843c" stroke-width="0.8" opacity="0.7"/>
<polyline points="156.20,681.29 159.12,671.20 162.04,683.45 164.95,664.70 167.87,654.00 170.79,681.61 173.71,678.29 176.62,656.20 179.54,683.05 182.46,679.78 185.38,649.10 188.29,683.95 191.21,680.82 194.13,678.05 197.05,678.75 199.96,678.76 202.88,637.90 205.80,681.03 208.72,677.92 211.64,681.52 214.55,677.47 217.47,679.10 220.39,657.20 223.31,681.76 226.22,679.27 229.14,678.78 232.06,677.92 234.98,678.80 237.89,648.20 240.81,683.19 243.73,678.55 246.65,677.97 249.56,680.61 252.48,677.83 255.40,654.00 258.32,683.18 261.24,680.51 264.15,677.68 267.07,678.92 269.99,678.40 272.91,648.70 275.82,682.53 278.74,680.35 281.66,678.93 284.58,680.87 287.49,678.85 290.41,664.70 293.33,682.26 296.25,677.41 299.16,679.52 302.08,678.61 305.00,679.01 307.92,647.60 310.84,683.77 313.75,680.54 316.67,676.92 319.59,678.99 322.51,679.63 325.42,659.80 328.34,684.67 331.26,678.55 334.18,673.40 337.09,683.83 340.01,681.46 342.93,560.00 345.85,681.50 348.76,678.64 351.68,679.74 354.60,667.60 357.52,684.10 360.44,652.90 363.35,682.82 366.27,679.93 369.19,677.51 372.11,669.70 375.02,683.89 377.94,679.82 380.86,643.90 383.78,683.83 386.69,679.70 389.61,677.02 392.53,680.22 395.45,678.72 398.36,641.70 401.28,683.99 404.20,655.10 407.12,683.04 410.04,680.60 412.95,677.35 415.87,648.20 418.79,684.00 421.71,676.69 424.62,681.14 427.54,676.86 430.46,655.10 433.38,684.57 436.29,677.47 439.21,672.30 442.13,684.24 445.05,679.95 447.96,678.18 450.88,655.50 453.80,684.00 456.72,676.51 459.64,676.61 462.55,680.91 465.47,663.70 468.39,682.69 471.31,678.92 474.22,670.60 477.14,684.44 480.06,678.57 482.98,679.16 485.89,652.50 488.81,684.59 491.73,676.35 494.65,676.81 497.56,677.75 500.48,654.00 503.40,682.86 506.32,678.71 509.24,676.97 512.15,680.47 515.07,680.12 517.99,675.96 520.91,655.10 523.82,683.03 526.74,678.96 529.66,677.80 532.58,679.71 535.49,664.30 538.41,681.83 541.33,680.21 544.25,678.77 547.16,676.76 550.08,676.65 553.00,678.44 555.92,644.30 558.84,684.48 561.75,678.25 564.67,677.88 567.59,680.12 570.51,655.10 573.42,683.05 576.34,676.06 579.26,679.14 582.18,679.80 585.09,677.16 588.01,676.51 590.93,647.00 593.85,683.07 596.76,680.31 599.68,676.55 602.60,679.86 605.52,676.00 608.44,666.00 611.35,684.57 614.27,676.97 617.19,653.90 620.11,680.76 623.02,676.47 625.94,639.50 628.86,683.79 631.78,679.86 634.69,677.40 637.61,678.95 640.53,678.90 643.45,662.10 646.36,684.30 649.28,678.37 652.20,673.30 655.12,682.76 658.04,676.40 660.95,646.60 663.87,684.01 666.79,677.64 669.71,675.61 672.62,679.50 675.54,675.49 678.46,661.00 681.38,682.16 684.29,678.94 687.21,678.36 690.13,676.52 693.05,678.43 695.96,636.70 698.88,683.28 701.80,678.77 704.72,677.48 707.64,678.96 710.55,678.21 713.47,656.70 716.39,684.18 719.31,677.46 722.22,675.73 725.14,677.37 728.06,675.53 730.98,645.90 733.89,684.47 736.81,678.51 739.73,676.35 742.65,675.47 745.56,678.69 748.48,655.20 751.40,681.73 754.32,678.33 757.24,678.03 760.15,675.99 763.07,679.08 765.99,638.80 768.91,683.57 771.82,679.45 774.74,677.35 777.66,678.44 780.58,674.79 783.49,658.20 786.41,681.49 789.33,678.86 792.25,663.20 795.16,682.79 798.08,675.60 801.00,634.10 803.92,680.90 806.84,678.03 809.75,674.62 812.67,676.68 815.59,676.87 818.51,656.70 821.42,683.46 824.34,676.09 827.26,670.70 830.18,683.67 833.09,674.66 836.01,618.00 838.93,683.60 841.85,676.00 844.76,677.62 847.68,678.79 850.60,675.43 853.52,645.30 856.44,681.38 859.35,674.82 862.27,660.40 865.19,682.13 868.11,677.40 871.02,627.20 873.94,683.28 876.86,678.44 879.78,678.48 882.69,675.16 885.61,678.04 888.53,655.20 891.45,684.30 894.36,676.02 897.28,676.94 900.20,676.30 903.12,677.87 906.04,635.80 908.95,681.91 911.87,674.19 914.79,676.11 917.71,675.70 920.62,675.43 923.54,657.10 926.46,680.75 929.38,678.72 932.29,664.20 935.21,682.28 938.13,677.75 941.05,678.49 943.96,636.70 946.88,684.67 949.80,674.29 952.72,674.76 955.64,678.36 958.55,657.80 961.47,684.56 964.39,676.99 967.31,675.16 970.22,674.35 973.14,674.00 976.06,674.90 978.98,638.40 981.89,684.32 984.81,674.78 987.73,677.92 990.65,678.06 993.56,658.90 996.48,683.99 999.40,676.34" fill="none" stroke="#6d2a5e" stroke-width="1.4"/>
<text x="148.5" y="502.5" font-size="15.2" font-weight="normal" fill="#585d64" text-anchor="end" textLength="36.2" lengthAdjust="spacingAndGlyphs" >100%</text>
<text x="148.5" y="553.2" font-size="15.2" font-weight="normal" fill="#585d64" text-anchor="end" textLength="28.3" lengthAdjust="spacingAndGlyphs" >75%</text>
<text x="148.5" y="604.0" font-size="15.2" font-weight="normal" fill="#585d64" text-anchor="end" textLength="28.3" lengthAdjust="spacingAndGlyphs" >50%</text>
<text x="148.5" y="654.7" font-size="15.2" font-weight="normal" fill="#585d64" text-anchor="end" textLength="28.3" lengthAdjust="spacingAndGlyphs" >25%</text>
<text x="148.5" y="705.4" font-size="15.2" font-weight="normal" fill="#585d64" text-anchor="end" textLength="20.4" lengthAdjust="spacingAndGlyphs" >0%</text>
<text x="201.0" y="724.8" font-size="15.2" font-weight="normal" fill="#585d64" text-anchor="middle" textLength="38.5" lengthAdjust="spacingAndGlyphs" >20:00</text>
<text x="341.8" y="724.8" font-size="15.2" font-weight="normal" fill="#585d64" text-anchor="middle" textLength="38.5" lengthAdjust="spacingAndGlyphs" >00:00</text>
<text x="482.1" y="724.8" font-size="15.2" font-weight="normal" fill="#585d64" text-anchor="middle" textLength="38.5" lengthAdjust="spacingAndGlyphs" >04:00</text>
<text x="623.8" y="724.8" font-size="15.2" font-weight="normal" fill="#585d64" text-anchor="middle" textLength="38.5" lengthAdjust="spacingAndGlyphs" >08:00</text>
<text x="764.5" y="724.8" font-size="15.2" font-weight="normal" fill="#585d64" text-anchor="middle" textLength="38.5" lengthAdjust="spacingAndGlyphs" >12:00</text>
<text x="905.4" y="724.8" font-size="15.2" font-weight="normal" fill="#585d64" text-anchor="middle" textLength="38.5" lengthAdjust="spacingAndGlyphs" >16:00</text>
<rect x="124" y="747.3" width="18" height="5.4" rx="1" fill="#eab839"/>
<text x="152" y="755.2" font-size="15.2" font-weight="normal" fill="#585d64" text-anchor="start" textLength="89" lengthAdjust="spacingAndGlyphs" >Busy System</text>
<rect x="254.5" y="747.3" width="18" height="5.4" rx="1" fill="#0a437c"/>
<text x="283.3" y="755.2" font-size="15.2" font-weight="normal" fill="#585d64" text-anchor="start" textLength="69.5" lengthAdjust="spacingAndGlyphs" >Busy User</text>
<rect x="366" y="747.3" width="18" height="5.4" rx="1" fill="#890f02"/>
<text x="394.7" y="755.2" font-size="15.2" font-weight="normal" fill="#585d64" text-anchor="start" textLength="79.5" lengthAdjust="spacingAndGlyphs" >Busy Iowait</text>
<rect x="487" y="747.3" width="18" height="5.4" rx="1" fill="#ef843c"/>
<text x="515.8" y="755.2" font-size="15.2" font-weight="normal" fill="#585d64" text-anchor="start" textLength="71" lengthAdjust="spacingAndGlyphs" >Busy IRQs</text>
<rect x="599.5" y="747.3" width="18" height="5.4" rx="1" fill="#6d1f62"/>
<text x="628" y="755.2" font-size="15.2" font-weight="normal" fill="#585d64" text-anchor="start" textLength="76" lengthAdjust="spacingAndGlyphs" >Busy Other</text>
<rect x="717" y="747.3" width="18" height="5.4" rx="1" fill="#7eb26d"/>
<text x="745.5" y="755.2" font-size="15.2" font-weight="normal" fill="#585d64" text-anchor="start" textLength="25" lengthAdjust="spacingAndGlyphs" >Idle</text>
<rect x="1120.7" y="532.7" width="823.6" height="57.7" fill="#e5a298"/>
<polygon points="1120.7,700.2 1120.7,590.4 1944.3,590.4 1944.3,700.2" fill="#d0e4c9"/>
<polygon points="1120.7,700.2 1120.70,594.84 1123.45,594.73 1126.21,594.76 1128.96,594.62 1131.72,594.86 1134.47,594.84 1137.23,594.63 1139.98,591.82 1142.74,594.29 1145.49,594.20 1148.25,594.36 1151.00,594.21 1153.75,593.93 1156.51,594.09 1159.26,594.08 1162.02,594.20 1164.77,594.07 1167.53,593.92 1170.28,594.03 1173.04,594.07 1175.79,593.84 1178.54,593.99 1181.30,593.97 1184.05,594.20 1186.81,594.32 1189.56,594.37 1192.32,594.49 1195.07,594.77 1197.83,594.62 1200.58,594.45 1203.34,594.34 1206.09,594.20 1208.84,594.13 1211.60,594.18 1214.35,594.03 1217.11,594.29 1219.86,594.41 1222.62,594.34 1225.37,594.37 1228.13,594.41 1230.88,594.50 1233.64,594.39 1236.39,594.39 1239.14,594.53 1241.90,594.60 1244.65,594.67 1247.41,594.45 1250.16,594.32 1252.92,592.93 1255.67,594.34 1258.43,594.02 1261.18,594.17 1263.93,594.15 1266.69,594.22 1269.44,594.31 1272.20,594.33 1274.95,594.29 1277.71,594.52 1280.46,594.21 1283.22,594.22 1285.97,594.22 1288.73,594.28 1291.48,594.40 1294.23,594.32 1296.99,594.25 1299.74,594.27 1302.50,593.23 1305.25,594.37 1308.01,594.35 1310.76,594.20 1313.52,594.22 1316.27,594.12 1319.03,594.29 1321.78,594.46 1324.53,594.22 1327.29,594.18 1330.04,594.02 1332.80,593.98 1335.55,593.99 1338.31,594.02 1341.06,593.81 1343.82,593.89 1346.57,593.83 1349.32,593.86 1352.08,594.04 1354.83,594.01 1357.59,593.95 1360.34,593.92 1363.10,593.87 1365.85,593.84 1368.61,593.95 1371.36,593.83 1374.12,593.93 1376.87,593.94 1379.62,593.91 1382.38,593.91 1385.13,593.94 1387.89,594.01 1390.64,594.06 1393.40,594.22 1396.15,594.24 1398.91,594.48 1401.66,592.49 1404.42,594.53 1407.17,594.59 1409.92,594.72 1412.68,594.53 1415.43,594.43 1418.19,594.45 1420.94,594.45 1423.70,594.54 1426.45,594.56 1429.21,594.30 1431.96,594.27 1434.71,594.41 1437.47,594.19 1440.22,594.15 1442.98,594.09 1445.73,593.93 1448.49,594.15 1451.24,594.12 1454.00,594.00 1456.75,594.15 1459.51,591.12 1462.26,593.91 1465.01,594.00 1467.77,594.04 1470.52,594.33 1473.28,594.23 1476.03,594.17 1478.79,594.42 1481.54,594.52 1484.30,594.52 1487.05,594.28 1489.81,593.97 1492.56,593.97 1495.31,593.81 1498.07,593.73 1500.82,593.74 1503.58,593.70 1506.33,593.68 1509.09,593.72 1511.84,593.76 1514.60,594.03 1517.35,594.18 1520.10,594.32 1522.86,594.16 1525.61,594.13 1528.37,594.40 1531.12,594.48 1533.88,594.46 1536.63,594.23 1539.39,594.07 1542.14,594.22 1544.90,594.34 1547.65,594.22 1550.40,594.07 1553.16,594.05 1555.91,593.02 1558.67,594.13 1561.42,594.11 1564.18,594.21 1566.93,594.14 1569.69,594.21 1572.44,594.02 1575.19,593.91 1577.95,593.85 1580.70,594.00 1583.46,594.02 1586.21,594.13 1588.97,594.36 1591.72,594.51 1594.48,594.48 1597.23,594.68 1599.99,594.54 1602.74,594.61 1605.49,594.64 1608.25,594.43 1611.00,594.53 1613.76,594.65 1616.51,594.71 1619.27,594.82 1622.02,594.62 1624.78,594.65 1627.53,594.86 1630.29,594.79 1633.04,594.80 1635.79,594.79 1638.55,594.65 1641.30,594.76 1644.06,594.48 1646.81,594.29 1649.57,594.21 1652.32,593.95 1655.08,593.81 1657.83,593.89 1660.58,593.86 1663.34,593.92 1666.09,594.12 1668.85,594.19 1671.60,594.30 1674.36,594.41 1677.11,594.38 1679.87,594.35 1682.62,594.41 1685.38,594.42 1688.13,594.42 1690.88,594.54 1693.64,594.58 1696.39,594.72 1699.15,594.54 1701.90,594.62 1704.66,594.53 1707.41,594.40 1710.17,594.29 1712.92,594.05 1715.68,593.78 1718.43,593.90 1721.18,593.73 1723.94,593.56 1726.69,593.78 1729.45,593.83 1732.20,593.99 1734.96,594.25 1737.71,594.32 1740.47,594.63 1743.22,594.76 1745.97,594.73 1748.73,598.56 1751.48,594.59 1754.24,594.52 1756.99,594.34 1759.75,594.32 1762.50,594.16 1765.26,594.04 1768.01,594.07 1770.77,594.04 1773.52,593.99 1776.27,593.99 1779.03,594.00 1781.78,594.09 1784.54,594.11 1787.29,594.25 1790.05,594.21 1792.80,594.10 1795.56,594.30 1798.31,594.17 1801.07,594.12 1803.82,594.19 1806.57,594.08 1809.33,593.96 1812.08,593.95 1814.84,593.74 1817.59,593.60 1820.35,593.76 1823.10,593.65 1825.86,593.86 1828.61,594.11 1831.36,594.04 1834.12,594.37 1836.87,594.64 1839.63,594.40 1842.38,594.58 1845.14,594.42 1847.89,594.33 1850.65,594.64 1853.40,594.39 1856.16,594.24 1858.91,594.54 1861.66,594.48 1864.42,594.49 1867.17,594.66 1869.93,594.61 1872.68,594.73 1875.44,594.59 1878.19,594.48 1880.95,594.39 1883.70,594.30 1886.46,593.98 1889.21,593.89 1891.96,593.72 1894.72,593.83 1897.47,593.85 1900.23,593.85 1902.98,593.87 1905.74,594.05 1908.49,594.01 1911.25,594.24 1914.00,594.27 1916.75,594.38 1919.51,594.55 1922.26,594.71 1925.02,594.59 1927.77,594.49 1930.53,594.53 1933.28,594.62 1936.04,594.49 1938.79,594.36 1941.55,594.27 1944.30,594.45 1944.3,700.2" fill="#9aaabb"/>
<polygon points="1120.7,700.2 1120.70,606.00 1123.45,605.96 1126.21,605.97 1128.96,605.85 1131.72,605.87 1134.47,605.89 1137.23,605.85 1139.98,603.25 1142.74,605.69 1145.49,605.55 1148.25,605.72 1151.00,605.78 1153.75,605.61 1156.51,605.66 1159.26,605.91 1162.02,606.01 1164.77,606.16 1167.53,605.97 1170.28,605.78 1173.04,605.92 1175.79,605.66 1178.54,605.43 1181.30,605.32 1184.05,605.15 1186.81,605.24 1189.56,605.36 1192.32,605.45 1195.07,605.58 1197.83,605.71 1200.58,605.78 1203.34,605.96 1206.09,605.96 1208.84,605.91 1211.60,605.96 1214.35,606.09 1217.11,606.15 1219.86,606.21 1222.62,606.11 1225.37,606.05 1228.13,606.05 1230.88,605.79 1233.64,605.72 1236.39,605.59 1239.14,605.63 1241.90,605.65 1244.65,605.86 1247.41,606.02 1250.16,606.00 1252.92,604.34 1255.67,605.99 1258.43,605.88 1261.18,606.05 1263.93,605.89 1266.69,605.67 1269.44,605.85 1272.20,606.01 1274.95,605.83 1277.71,605.72 1280.46,605.53 1283.22,605.70 1285.97,605.89 1288.73,605.75 1291.48,605.59 1294.23,605.54 1296.99,605.54 1299.74,605.67 1302.50,603.95 1305.25,605.39 1308.01,605.48 1310.76,605.47 1313.52,605.65 1316.27,605.67 1319.03,605.62 1321.78,605.61 1324.53,605.57 1327.29,605.50 1330.04,605.52 1332.80,605.59 1335.55,605.78 1338.31,605.69 1341.06,605.90 1343.82,605.84 1346.57,605.90 1349.32,606.06 1352.08,605.97 1354.83,605.77 1357.59,605.96 1360.34,605.77 1363.10,605.79 1365.85,605.89 1368.61,605.74 1371.36,605.65 1374.12,605.64 1376.87,605.38 1379.62,605.49 1382.38,605.48 1385.13,605.43 1387.89,605.45 1390.64,605.49 1393.40,605.74 1396.15,605.86 1398.91,605.85 1401.66,605.03 1404.42,605.91 1407.17,605.85 1409.92,605.98 1412.68,605.94 1415.43,605.87 1418.19,605.76 1420.94,605.73 1423.70,605.94 1426.45,605.95 1429.21,605.97 1431.96,605.99 1434.71,606.09 1437.47,606.15 1440.22,605.97 1442.98,605.71 1445.73,605.93 1448.49,605.73 1451.24,605.68 1454.00,605.58 1456.75,605.69 1459.51,602.33 1462.26,605.91 1465.01,605.68 1467.77,605.82 1470.52,605.64 1473.28,605.63 1476.03,605.55 1478.79,605.63 1481.54,605.72 1484.30,605.75 1487.05,605.81 1489.81,605.84 1492.56,605.78 1495.31,605.70 1498.07,605.58 1500.82,605.43 1503.58,605.40 1506.33,605.24 1509.09,605.35 1511.84,605.38 1514.60,605.40 1517.35,605.53 1520.10,605.79 1522.86,605.93 1525.61,606.02 1528.37,606.03 1531.12,606.03 1533.88,605.94 1536.63,605.69 1539.39,605.67 1542.14,605.68 1544.90,605.76 1547.65,605.60 1550.40,605.74 1553.16,605.87 1555.91,604.87 1558.67,605.90 1561.42,605.99 1564.18,605.73 1566.93,605.88 1569.69,605.91 1572.44,606.03 1575.19,606.03 1577.95,606.14 1580.70,606.08 1583.46,606.32 1586.21,606.27 1588.97,606.25 1591.72,606.25 1594.48,606.29 1597.23,606.21 1599.99,606.21 1602.74,606.19 1605.49,606.26 1608.25,606.24 1611.00,606.09 1613.76,606.01 1616.51,606.06 1619.27,605.86 1622.02,605.80 1624.78,605.92 1627.53,605.99 1630.29,606.09 1633.04,606.03 1635.79,606.07 1638.55,606.21 1641.30,606.16 1644.06,606.11 1646.81,605.88 1649.57,605.89 1652.32,605.79 1655.08,605.75 1657.83,605.72 1660.58,605.66 1663.34,605.62 1666.09,605.74 1668.85,605.70 1671.60,605.96 1674.36,605.86 1677.11,605.72 1679.87,605.74 1682.62,605.74 1685.38,605.65 1688.13,605.53 1690.88,605.52 1693.64,605.64 1696.39,605.76 1699.15,605.93 1701.90,605.83 1704.66,605.96 1707.41,605.97 1710.17,605.83 1712.92,605.87 1715.68,606.01 1718.43,606.01 1721.18,606.02 1723.94,606.00 1726.69,606.03 1729.45,605.95 1732.20,605.86 1734.96,605.84 1737.71,605.83 1740.47,605.92 1743.22,606.03 1745.97,606.02 1748.73,603.53 1751.48,606.01 1754.24,605.85 1756.99,605.67 1759.75,605.59 1762.50,605.49 1765.26,605.56 1768.01,605.60 1770.77,605.71 1773.52,605.91 1776.27,605.98 1779.03,605.88 1781.78,605.71 1784.54,605.82 1787.29,605.74 1790.05,605.70 1792.80,605.59 1795.56,605.55 1798.31,605.75 1801.07,605.75 1803.82,605.54 1806.57,605.65 1809.33,605.46 1812.08,605.53 1814.84,605.51 1817.59,605.33 1820.35,605.33 1823.10,605.48 1825.86,605.47 1828.61,605.65 1831.36,605.60 1834.12,605.76 1836.87,605.99 1839.63,606.17 1842.38,606.05 1845.14,606.06 1847.89,605.93 1850.65,605.75 1853.40,605.65 1856.16,605.58 1858.91,605.44 1861.66,605.46 1864.42,605.42 1867.17,605.57 1869.93,605.71 1872.68,605.76 1875.44,605.77 1878.19,605.83 1880.95,605.98 1883.70,606.14 1886.46,605.96 1889.21,606.08 1891.96,606.11 1894.72,605.93 1897.47,605.95 1900.23,605.90 1902.98,605.90 1905.74,605.99 1908.49,605.88 1911.25,605.93 1914.00,606.12 1916.75,606.26 1919.51,606.21 1922.26,606.14 1925.02,606.09 1927.77,606.13 1930.53,606.11 1933.28,606.07 1936.04,606.01 1938.79,606.05 1941.55,606.04 1944.30,606.25 1944.3,700.2" fill="#f6e1ab"/>
<line x1="1164.1" y1="497.3" x2="1164.1" y2="700.2" stroke="rgba(0,0,0,0.09)" stroke-width="1"/>
<line x1="1302" y1="497.3" x2="1302" y2="700.2" stroke="rgba(0,0,0,0.09)" stroke-width="1"/>
<line x1="1440.1" y1="497.3" x2="1440.1" y2="700.2" stroke="rgba(0,0,0,0.09)" stroke-width="1"/>
<line x1="1576.3" y1="497.3" x2="1576.3" y2="700.2" stroke="rgba(0,0,0,0.09)" stroke-width="1"/>
<line x1="1714.5" y1="497.3" x2="1714.5" y2="700.2" stroke="rgba(0,0,0,0.09)" stroke-width="1"/>
<line x1="1852.6" y1="497.3" x2="1852.6" y2="700.2" stroke="rgba(0,0,0,0.09)" stroke-width="1"/>
<line x1="1120.7" y1="531.1" x2="1944.3" y2="531.1" stroke="rgba(0,0,0,0.09)" stroke-width="1"/>
<line x1="1120.7" y1="564.9" x2="1944.3" y2="564.9" stroke="rgba(0,0,0,0.09)" stroke-width="1"/>
<line x1="1120.7" y1="598.8" x2="1944.3" y2="598.8" stroke="rgba(0,0,0,0.09)" stroke-width="1"/>
<line x1="1120.7" y1="632.6" x2="1944.3" y2="632.6" stroke="rgba(0,0,0,0.09)" stroke-width="1"/>
<line x1="1120.7" y1="666.4" x2="1944.3" y2="666.4" stroke="rgba(0,0,0,0.09)" stroke-width="1"/>
<line x1="1120.7" y1="497.3" x2="1944.3" y2="497.3" stroke="rgba(0,0,0,0.09)" stroke-width="1"/>
<line x1="1120.7" y1="532.7" x2="1944.3" y2="532.7" stroke="#c4331a" stroke-width="1.6"/>
<line x1="1120.7" y1="590.6" x2="1944.3" y2="590.6" stroke="#86b878" stroke-width="1"/>
<polyline points="1120.70,594.84 1123.45,594.73 1126.21,594.76 1128.96,594.62 1131.72,594.86 1134.47,594.84 1137.23,594.63 1139.98,591.82 1142.74,594.29 1145.49,594.20 1148.25,594.36 1151.00,594.21 1153.75,593.93 1156.51,594.09 1159.26,594.08 1162.02,594.20 1164.77,594.07 1167.53,593.92 1170.28,594.03 1173.04,594.07 1175.79,593.84 1178.54,593.99 1181.30,593.97 1184.05,594.20 1186.81,594.32 1189.56,594.37 1192.32,594.49 1195.07,594.77 1197.83,594.62 1200.58,594.45 1203.34,594.34 1206.09,594.20 1208.84,594.13 1211.60,594.18 1214.35,594.03 1217.11,594.29 1219.86,594.41 1222.62,594.34 1225.37,594.37 1228.13,594.41 1230.88,594.50 1233.64,594.39 1236.39,594.39 1239.14,594.53 1241.90,594.60 1244.65,594.67 1247.41,594.45 1250.16,594.32 1252.92,592.93 1255.67,594.34 1258.43,594.02 1261.18,594.17 1263.93,594.15 1266.69,594.22 1269.44,594.31 1272.20,594.33 1274.95,594.29 1277.71,594.52 1280.46,594.21 1283.22,594.22 1285.97,594.22 1288.73,594.28 1291.48,594.40 1294.23,594.32 1296.99,594.25 1299.74,594.27 1302.50,593.23 1305.25,594.37 1308.01,594.35 1310.76,594.20 1313.52,594.22 1316.27,594.12 1319.03,594.29 1321.78,594.46 1324.53,594.22 1327.29,594.18 1330.04,594.02 1332.80,593.98 1335.55,593.99 1338.31,594.02 1341.06,593.81 1343.82,593.89 1346.57,593.83 1349.32,593.86 1352.08,594.04 1354.83,594.01 1357.59,593.95 1360.34,593.92 1363.10,593.87 1365.85,593.84 1368.61,593.95 1371.36,593.83 1374.12,593.93 1376.87,593.94 1379.62,593.91 1382.38,593.91 1385.13,593.94 1387.89,594.01 1390.64,594.06 1393.40,594.22 1396.15,594.24 1398.91,594.48 1401.66,592.49 1404.42,594.53 1407.17,594.59 1409.92,594.72 1412.68,594.53 1415.43,594.43 1418.19,594.45 1420.94,594.45 1423.70,594.54 1426.45,594.56 1429.21,594.30 1431.96,594.27 1434.71,594.41 1437.47,594.19 1440.22,594.15 1442.98,594.09 1445.73,593.93 1448.49,594.15 1451.24,594.12 1454.00,594.00 1456.75,594.15 1459.51,591.12 1462.26,593.91 1465.01,594.00 1467.77,594.04 1470.52,594.33 1473.28,594.23 1476.03,594.17 1478.79,594.42 1481.54,594.52 1484.30,594.52 1487.05,594.28 1489.81,593.97 1492.56,593.97 1495.31,593.81 1498.07,593.73 1500.82,593.74 1503.58,593.70 1506.33,593.68 1509.09,593.72 1511.84,593.76 1514.60,594.03 1517.35,594.18 1520.10,594.32 1522.86,594.16 1525.61,594.13 1528.37,594.40 1531.12,594.48 1533.88,594.46 1536.63,594.23 1539.39,594.07 1542.14,594.22 1544.90,594.34 1547.65,594.22 1550.40,594.07 1553.16,594.05 1555.91,593.02 1558.67,594.13 1561.42,594.11 1564.18,594.21 1566.93,594.14 1569.69,594.21 1572.44,594.02 1575.19,593.91 1577.95,593.85 1580.70,594.00 1583.46,594.02 1586.21,594.13 1588.97,594.36 1591.72,594.51 1594.48,594.48 1597.23,594.68 1599.99,594.54 1602.74,594.61 1605.49,594.64 1608.25,594.43 1611.00,594.53 1613.76,594.65 1616.51,594.71 1619.27,594.82 1622.02,594.62 1624.78,594.65 1627.53,594.86 1630.29,594.79 1633.04,594.80 1635.79,594.79 1638.55,594.65 1641.30,594.76 1644.06,594.48 1646.81,594.29 1649.57,594.21 1652.32,593.95 1655.08,593.81 1657.83,593.89 1660.58,593.86 1663.34,593.92 1666.09,594.12 1668.85,594.19 1671.60,594.30 1674.36,594.41 1677.11,594.38 1679.87,594.35 1682.62,594.41 1685.38,594.42 1688.13,594.42 1690.88,594.54 1693.64,594.58 1696.39,594.72 1699.15,594.54 1701.90,594.62 1704.66,594.53 1707.41,594.40 1710.17,594.29 1712.92,594.05 1715.68,593.78 1718.43,593.90 1721.18,593.73 1723.94,593.56 1726.69,593.78 1729.45,593.83 1732.20,593.99 1734.96,594.25 1737.71,594.32 1740.47,594.63 1743.22,594.76 1745.97,594.73 1748.73,598.56 1751.48,594.59 1754.24,594.52 1756.99,594.34 1759.75,594.32 1762.50,594.16 1765.26,594.04 1768.01,594.07 1770.77,594.04 1773.52,593.99 1776.27,593.99 1779.03,594.00 1781.78,594.09 1784.54,594.11 1787.29,594.25 1790.05,594.21 1792.80,594.10 1795.56,594.30 1798.31,594.17 1801.07,594.12 1803.82,594.19 1806.57,594.08 1809.33,593.96 1812.08,593.95 1814.84,593.74 1817.59,593.60 1820.35,593.76 1823.10,593.65 1825.86,593.86 1828.61,594.11 1831.36,594.04 1834.12,594.37 1836.87,594.64 1839.63,594.40 1842.38,594.58 1845.14,594.42 1847.89,594.33 1850.65,594.64 1853.40,594.39 1856.16,594.24 1858.91,594.54 1861.66,594.48 1864.42,594.49 1867.17,594.66 1869.93,594.61 1872.68,594.73 1875.44,594.59 1878.19,594.48 1880.95,594.39 1883.70,594.30 1886.46,593.98 1889.21,593.89 1891.96,593.72 1894.72,593.83 1897.47,593.85 1900.23,593.85 1902.98,593.87 1905.74,594.05 1908.49,594.01 1911.25,594.24 1914.00,594.27 1916.75,594.38 1919.51,594.55 1922.26,594.71 1925.02,594.59 1927.77,594.49 1930.53,594.53 1933.28,594.62 1936.04,594.49 1938.79,594.36 1941.55,594.27 1944.30,594.45" fill="none" stroke="#2e4c68" stroke-width="1.5"/>
<polyline points="1120.70,606.00 1123.45,605.96 1126.21,605.97 1128.96,605.85 1131.72,605.87 1134.47,605.89 1137.23,605.85 1139.98,603.25 1142.74,605.69 1145.49,605.55 1148.25,605.72 1151.00,605.78 1153.75,605.61 1156.51,605.66 1159.26,605.91 1162.02,606.01 1164.77,606.16 1167.53,605.97 1170.28,605.78 1173.04,605.92 1175.79,605.66 1178.54,605.43 1181.30,605.32 1184.05,605.15 1186.81,605.24 1189.56,605.36 1192.32,605.45 1195.07,605.58 1197.83,605.71 1200.58,605.78 1203.34,605.96 1206.09,605.96 1208.84,605.91 1211.60,605.96 1214.35,606.09 1217.11,606.15 1219.86,606.21 1222.62,606.11 1225.37,606.05 1228.13,606.05 1230.88,605.79 1233.64,605.72 1236.39,605.59 1239.14,605.63 1241.90,605.65 1244.65,605.86 1247.41,606.02 1250.16,606.00 1252.92,604.34 1255.67,605.99 1258.43,605.88 1261.18,606.05 1263.93,605.89 1266.69,605.67 1269.44,605.85 1272.20,606.01 1274.95,605.83 1277.71,605.72 1280.46,605.53 1283.22,605.70 1285.97,605.89 1288.73,605.75 1291.48,605.59 1294.23,605.54 1296.99,605.54 1299.74,605.67 1302.50,603.95 1305.25,605.39 1308.01,605.48 1310.76,605.47 1313.52,605.65 1316.27,605.67 1319.03,605.62 1321.78,605.61 1324.53,605.57 1327.29,605.50 1330.04,605.52 1332.80,605.59 1335.55,605.78 1338.31,605.69 1341.06,605.90 1343.82,605.84 1346.57,605.90 1349.32,606.06 1352.08,605.97 1354.83,605.77 1357.59,605.96 1360.34,605.77 1363.10,605.79 1365.85,605.89 1368.61,605.74 1371.36,605.65 1374.12,605.64 1376.87,605.38 1379.62,605.49 1382.38,605.48 1385.13,605.43 1387.89,605.45 1390.64,605.49 1393.40,605.74 1396.15,605.86 1398.91,605.85 1401.66,605.03 1404.42,605.91 1407.17,605.85 1409.92,605.98 1412.68,605.94 1415.43,605.87 1418.19,605.76 1420.94,605.73 1423.70,605.94 1426.45,605.95 1429.21,605.97 1431.96,605.99 1434.71,606.09 1437.47,606.15 1440.22,605.97 1442.98,605.71 1445.73,605.93 1448.49,605.73 1451.24,605.68 1454.00,605.58 1456.75,605.69 1459.51,602.33 1462.26,605.91 1465.01,605.68 1467.77,605.82 1470.52,605.64 1473.28,605.63 1476.03,605.55 1478.79,605.63 1481.54,605.72 1484.30,605.75 1487.05,605.81 1489.81,605.84 1492.56,605.78 1495.31,605.70 1498.07,605.58 1500.82,605.43 1503.58,605.40 1506.33,605.24 1509.09,605.35 1511.84,605.38 1514.60,605.40 1517.35,605.53 1520.10,605.79 1522.86,605.93 1525.61,606.02 1528.37,606.03 1531.12,606.03 1533.88,605.94 1536.63,605.69 1539.39,605.67 1542.14,605.68 1544.90,605.76 1547.65,605.60 1550.40,605.74 1553.16,605.87 1555.91,604.87 1558.67,605.90 1561.42,605.99 1564.18,605.73 1566.93,605.88 1569.69,605.91 1572.44,606.03 1575.19,606.03 1577.95,606.14 1580.70,606.08 1583.46,606.32 1586.21,606.27 1588.97,606.25 1591.72,606.25 1594.48,606.29 1597.23,606.21 1599.99,606.21 1602.74,606.19 1605.49,606.26 1608.25,606.24 1611.00,606.09 1613.76,606.01 1616.51,606.06 1619.27,605.86 1622.02,605.80 1624.78,605.92 1627.53,605.99 1630.29,606.09 1633.04,606.03 1635.79,606.07 1638.55,606.21 1641.30,606.16 1644.06,606.11 1646.81,605.88 1649.57,605.89 1652.32,605.79 1655.08,605.75 1657.83,605.72 1660.58,605.66 1663.34,605.62 1666.09,605.74 1668.85,605.70 1671.60,605.96 1674.36,605.86 1677.11,605.72 1679.87,605.74 1682.62,605.74 1685.38,605.65 1688.13,605.53 1690.88,605.52 1693.64,605.64 1696.39,605.76 1699.15,605.93 1701.90,605.83 1704.66,605.96 1707.41,605.97 1710.17,605.83 1712.92,605.87 1715.68,606.01 1718.43,606.01 1721.18,606.02 1723.94,606.00 1726.69,606.03 1729.45,605.95 1732.20,605.86 1734.96,605.84 1737.71,605.83 1740.47,605.92 1743.22,606.03 1745.97,606.02 1748.73,603.53 1751.48,606.01 1754.24,605.85 1756.99,605.67 1759.75,605.59 1762.50,605.49 1765.26,605.56 1768.01,605.60 1770.77,605.71 1773.52,605.91 1776.27,605.98 1779.03,605.88 1781.78,605.71 1784.54,605.82 1787.29,605.74 1790.05,605.70 1792.80,605.59 1795.56,605.55 1798.31,605.75 1801.07,605.75 1803.82,605.54 1806.57,605.65 1809.33,605.46 1812.08,605.53 1814.84,605.51 1817.59,605.33 1820.35,605.33 1823.10,605.48 1825.86,605.47 1828.61,605.65 1831.36,605.60 1834.12,605.76 1836.87,605.99 1839.63,606.17 1842.38,606.05 1845.14,606.06 1847.89,605.93 1850.65,605.75 1853.40,605.65 1856.16,605.58 1858.91,605.44 1861.66,605.46 1864.42,605.42 1867.17,605.57 1869.93,605.71 1872.68,605.76 1875.44,605.77 1878.19,605.83 1880.95,605.98 1883.70,606.14 1886.46,605.96 1889.21,606.08 1891.96,606.11 1894.72,605.93 1897.47,605.95 1900.23,605.90 1902.98,605.90 1905.74,605.99 1908.49,605.88 1911.25,605.93 1914.00,606.12 1916.75,606.26 1919.51,606.21 1922.26,606.14 1925.02,606.09 1927.77,606.13 1930.53,606.11 1933.28,606.07 1936.04,606.01 1938.79,606.05 1941.55,606.04 1944.30,606.25" fill="none" stroke="#e0b040" stroke-width="1.3"/>
<text x="1113.5" y="502.5" font-size="15.2" font-weight="normal" fill="#585d64" text-anchor="end" textLength="55.0" lengthAdjust="spacingAndGlyphs" >27.9 GiB</text>
<text x="1113.5" y="536.3" font-size="15.2" font-weight="normal" fill="#585d64" text-anchor="end" textLength="55.0" lengthAdjust="spacingAndGlyphs" >23.3 GiB</text>
<text x="1113.5" y="570.1" font-size="15.2" font-weight="normal" fill="#585d64" text-anchor="end" textLength="55.0" lengthAdjust="spacingAndGlyphs" >18.6 GiB</text>
<text x="1113.5" y="604.0" font-size="15.2" font-weight="normal" fill="#585d64" text-anchor="end" textLength="55.0" lengthAdjust="spacingAndGlyphs" >14.0 GiB</text>
<text x="1113.5" y="637.8" font-size="15.2" font-weight="normal" fill="#585d64" text-anchor="end" textLength="55.0" lengthAdjust="spacingAndGlyphs" >9.31 GiB</text>
<text x="1113.5" y="671.6" font-size="15.2" font-weight="normal" fill="#585d64" text-anchor="end" textLength="55.0" lengthAdjust="spacingAndGlyphs" >4.66 GiB</text>
<text x="1113.5" y="705.4" font-size="15.2" font-weight="normal" fill="#585d64" text-anchor="end" textLength="21.2" lengthAdjust="spacingAndGlyphs" >0 B</text>
<text x="1164.1" y="724.8" font-size="15.2" font-weight="normal" fill="#585d64" text-anchor="middle" textLength="38.5" lengthAdjust="spacingAndGlyphs" >20:00</text>
<text x="1302.0" y="724.8" font-size="15.2" font-weight="normal" fill="#585d64" text-anchor="middle" textLength="38.5" lengthAdjust="spacingAndGlyphs" >00:00</text>
<text x="1440.1" y="724.8" font-size="15.2" font-weight="normal" fill="#585d64" text-anchor="middle" textLength="38.5" lengthAdjust="spacingAndGlyphs" >04:00</text>
<text x="1576.3" y="724.8" font-size="15.2" font-weight="normal" fill="#585d64" text-anchor="middle" textLength="38.5" lengthAdjust="spacingAndGlyphs" >08:00</text>
<text x="1714.5" y="724.8" font-size="15.2" font-weight="normal" fill="#585d64" text-anchor="middle" textLength="38.5" lengthAdjust="spacingAndGlyphs" >12:00</text>
<text x="1852.6" y="724.8" font-size="15.2" font-weight="normal" fill="#585d64" text-anchor="middle" textLength="38.5" lengthAdjust="spacingAndGlyphs" >16:00</text>
<rect x="1068.8" y="747.3" width="18" height="5.4" rx="1" fill="#e0f9d7"/>
<text x="1097.6" y="755.2" font-size="15.2" font-weight="normal" fill="#585d64" text-anchor="start" textLength="71" lengthAdjust="spacingAndGlyphs" >RAM Total</text>
<rect x="1183" y="747.3" width="18" height="5.4" rx="1" fill="#eab839"/>
<text x="1211.6" y="755.2" font-size="15.2" font-weight="normal" fill="#585d64" text-anchor="start" textLength="71.5" lengthAdjust="spacingAndGlyphs" >RAM Used</text>
<rect x="1296.2" y="747.3" width="18" height="5.4" rx="1" fill="#052b51"/>
<text x="1326" y="755.2" font-size="15.2" font-weight="normal" fill="#585d64" text-anchor="start" textLength="139" lengthAdjust="spacingAndGlyphs" >RAM Cache + Buffer</text>
<rect x="1479" y="747.3" width="18" height="5.4" rx="1" fill="#7eb26d"/>
<text x="1507.2" y="755.2" font-size="15.2" font-weight="normal" fill="#585d64" text-anchor="start" textLength="67" lengthAdjust="spacingAndGlyphs" >RAM Free</text>
<rect x="1587" y="747.3" width="18" height="5.4" rx="1" fill="#bf1b00"/>
<text x="1616.2" y="755.2" font-size="15.2" font-weight="normal" fill="#585d64" text-anchor="start" textLength="81.5" lengthAdjust="spacingAndGlyphs" >SWAP Used</text>
<line x1="232" y1="843.0" x2="232" y2="973" stroke="rgba(0,0,0,0.09)" stroke-width="1"/>
<line x1="367.1" y1="843.0" x2="367.1" y2="973" stroke="rgba(0,0,0,0.09)" stroke-width="1"/>
<line x1="502.7" y1="843.0" x2="502.7" y2="973" stroke="rgba(0,0,0,0.09)" stroke-width="1"/>
<line x1="638.3" y1="843.0" x2="638.3" y2="973" stroke="rgba(0,0,0,0.09)" stroke-width="1"/>
<line x1="773.3" y1="843.0" x2="773.3" y2="973" stroke="rgba(0,0,0,0.09)" stroke-width="1"/>
<line x1="908.9" y1="843.0" x2="908.9" y2="973" stroke="rgba(0,0,0,0.09)" stroke-width="1"/>
<line x1="188.6" y1="843.0" x2="1000.2" y2="843.0" stroke="rgba(0,0,0,0.09)" stroke-width="1"/>
<line x1="188.6" y1="870.7" x2="1000.2" y2="870.7" stroke="rgba(0,0,0,0.09)" stroke-width="1"/>
<line x1="188.6" y1="898.4" x2="1000.2" y2="898.4" stroke="rgba(0,0,0,0.09)" stroke-width="1"/>
<line x1="188.6" y1="926.1" x2="1000.2" y2="926.1" stroke="rgba(0,0,0,0.09)" stroke-width="1"/>
<line x1="188.6" y1="953.8" x2="1000.2" y2="953.8" stroke="rgba(0,0,0,0.09)" stroke-width="1"/>
<path d="M188.0 898.4 L190.4 891.0 L191.6 891.0 L194.0 898.4 Z" fill="#eab839" fill-opacity="0.3" stroke="#eab839" stroke-width="1.5" stroke-linejoin="round"/>
<path d="M188.0 898.4 L190.4 904.0 L191.6 904.0 L194.0 898.4 Z" fill="#705da0" fill-opacity="0.3" stroke="#705da0" stroke-width="1.5" stroke-linejoin="round"/>
<path d="M195.0 898.4 L197.4 894.0 L198.6 894.0 L201.0 898.4 Z" fill="#eab839" fill-opacity="0.3" stroke="#eab839" stroke-width="1.5" stroke-linejoin="round"/>
<path d="M195.0 898.4 L197.4 903.0 L198.6 903.0 L201.0 898.4 Z" fill="#705da0" fill-opacity="0.3" stroke="#705da0" stroke-width="1.5" stroke-linejoin="round"/>
<path d="M205.8 898.4 L209.0 873.6 L209.7 873.6 L212.8 898.4 Z" fill="#eab839" fill-opacity="0.3" stroke="#eab839" stroke-width="1.5" stroke-linejoin="round"/>
<path d="M205.8 898.4 L209.0 922.6 L209.7 922.6 L212.8 898.4 Z" fill="#705da0" fill-opacity="0.3" stroke="#705da0" stroke-width="1.5" stroke-linejoin="round"/>
<path d="M212.5 898.4 L215.4 889.0 L216.6 889.0 L219.5 898.4 Z" fill="#eab839" fill-opacity="0.3" stroke="#eab839" stroke-width="1.5" stroke-linejoin="round"/>
<path d="M212.5 898.4 L215.4 908.0 L216.6 908.0 L219.5 898.4 Z" fill="#e24d42" fill-opacity="0.3" stroke="#e24d42" stroke-width="1.5" stroke-linejoin="round"/>
<path d="M213.2 898.4 L215.4 904.2 L216.6 904.2 L218.8 898.4 Z" fill="#705da0" fill-opacity="0.3" stroke="#705da0" stroke-width="1.5" stroke-linejoin="round"/>
<path d="M231.0 898.4 L233.4 894.0 L234.6 894.0 L237.0 898.4 Z" fill="#eab839" fill-opacity="0.3" stroke="#eab839" stroke-width="1.5" stroke-linejoin="round"/>
<path d="M231.0 898.4 L233.4 903.0 L234.6 903.0 L237.0 898.4 Z" fill="#e24d42" fill-opacity="0.3" stroke="#e24d42" stroke-width="1.5" stroke-linejoin="round"/>
<path d="M231.6 898.4 L233.4 901.7 L234.6 901.7 L236.4 898.4 Z" fill="#705da0" fill-opacity="0.3" stroke="#705da0" stroke-width="1.5" stroke-linejoin="round"/>
<path d="M247.5 898.4 L249.4 896.0 L250.6 896.0 L252.5 898.4 Z" fill="#eab839" fill-opacity="0.3" stroke="#eab839" stroke-width="1.5" stroke-linejoin="round"/>
<path d="M247.5 898.4 L249.4 902.0 L250.6 902.0 L252.5 898.4 Z" fill="#705da0" fill-opacity="0.3" stroke="#705da0" stroke-width="1.5" stroke-linejoin="round"/>
<path d="M281.0 898.4 L283.4 891.0 L284.6 891.0 L287.0 898.4 Z" fill="#eab839" fill-opacity="0.3" stroke="#eab839" stroke-width="1.5" stroke-linejoin="round"/>
<path d="M281.0 898.4 L283.4 905.0 L284.6 905.0 L287.0 898.4 Z" fill="#e24d42" fill-opacity="0.3" stroke="#e24d42" stroke-width="1.5" stroke-linejoin="round"/>
<path d="M281.6 898.4 L283.4 902.7 L284.6 902.7 L286.4 898.4 Z" fill="#705da0" fill-opacity="0.3" stroke="#705da0" stroke-width="1.5" stroke-linejoin="round"/>
<path d="M370.0 898.4 L371.4 897.0 L372.6 897.0 L374.0 898.4 Z" fill="#eab839" fill-opacity="0.3" stroke="#eab839" stroke-width="1.5" stroke-linejoin="round"/>
<path d="M370.0 898.4 L371.4 901.0 L372.6 901.0 L374.0 898.4 Z" fill="#705da0" fill-opacity="0.3" stroke="#705da0" stroke-width="1.5" stroke-linejoin="round"/>
<path d="M375.6 898.4 L378.0 895.0 L379.2 895.0 L381.6 898.4 Z" fill="#eab839" fill-opacity="0.3" stroke="#eab839" stroke-width="1.5" stroke-linejoin="round"/>
<path d="M375.6 898.4 L378.0 905.0 L379.2 905.0 L381.6 898.4 Z" fill="#3d8fd6" fill-opacity="0.3" stroke="#3d8fd6" stroke-width="1.5" stroke-linejoin="round"/>
<path d="M376.2 898.4 L378.0 902.7 L379.2 902.7 L381.0 898.4 Z" fill="#705da0" fill-opacity="0.3" stroke="#705da0" stroke-width="1.5" stroke-linejoin="round"/>
<path d="M382.0 898.4 L384.4 895.0 L385.6 895.0 L388.0 898.4 Z" fill="#eab839" fill-opacity="0.3" stroke="#eab839" stroke-width="1.5" stroke-linejoin="round"/>
<path d="M382.0 898.4 L384.4 902.0 L385.6 902.0 L388.0 898.4 Z" fill="#705da0" fill-opacity="0.3" stroke="#705da0" stroke-width="1.5" stroke-linejoin="round"/>
<path d="M391.5 898.4 L393.4 896.0 L394.6 896.0 L396.5 898.4 Z" fill="#eab839" fill-opacity="0.3" stroke="#eab839" stroke-width="1.5" stroke-linejoin="round"/>
<path d="M391.5 898.4 L393.4 901.0 L394.6 901.0 L396.5 898.4 Z" fill="#705da0" fill-opacity="0.3" stroke="#705da0" stroke-width="1.5" stroke-linejoin="round"/>
<path d="M400.0 898.4 L402.4 893.0 L403.6 893.0 L406.0 898.4 Z" fill="#eab839" fill-opacity="0.3" stroke="#eab839" stroke-width="1.5" stroke-linejoin="round"/>
<path d="M400.0 898.4 L402.4 904.0 L403.6 904.0 L406.0 898.4 Z" fill="#705da0" fill-opacity="0.3" stroke="#705da0" stroke-width="1.5" stroke-linejoin="round"/>
<path d="M417.0 898.4 L420.6 888.5 L421.8 888.5 L425.4 898.4 Z" fill="#eab839" fill-opacity="0.3" stroke="#eab839" stroke-width="1.5" stroke-linejoin="round"/>
<path d="M417.0 898.4 L420.8 946.0 L421.6 946.0 L425.4 898.4 Z" fill="#3d8fd6" fill-opacity="0.3" stroke="#3d8fd6" stroke-width="1.5" stroke-linejoin="round"/>
<path d="M417.8 898.4 L420.8 923.2 L421.6 923.2 L424.6 898.4 Z" fill="#705da0" fill-opacity="0.3" stroke="#705da0" stroke-width="1.5" stroke-linejoin="round"/>
<path d="M425.5 898.4 L427.9 888.5 L429.1 888.5 L431.5 898.4 Z" fill="#eab839" fill-opacity="0.3" stroke="#eab839" stroke-width="1.5" stroke-linejoin="round"/>
<path d="M425.5 898.4 L428.1 913.6 L428.9 913.6 L431.5 898.4 Z" fill="#3d8fd6" fill-opacity="0.3" stroke="#3d8fd6" stroke-width="1.5" stroke-linejoin="round"/>
<path d="M426.1 898.4 L427.9 907.0 L429.1 907.0 L430.9 898.4 Z" fill="#705da0" fill-opacity="0.3" stroke="#705da0" stroke-width="1.5" stroke-linejoin="round"/>
<path d="M438.0 898.4 L439.4 897.0 L440.6 897.0 L442.0 898.4 Z" fill="#eab839" fill-opacity="0.3" stroke="#eab839" stroke-width="1.5" stroke-linejoin="round"/>
<path d="M438.0 898.4 L439.4 900.0 L440.6 900.0 L442.0 898.4 Z" fill="#705da0" fill-opacity="0.3" stroke="#705da0" stroke-width="1.5" stroke-linejoin="round"/>
<path d="M459.0 898.4 L461.4 895.0 L462.6 895.0 L465.0 898.4 Z" fill="#eab839" fill-opacity="0.3" stroke="#eab839" stroke-width="1.5" stroke-linejoin="round"/>
<path d="M459.0 898.4 L461.4 902.0 L462.6 902.0 L465.0 898.4 Z" fill="#705da0" fill-opacity="0.3" stroke="#705da0" stroke-width="1.5" stroke-linejoin="round"/>
<path d="M493.0 898.4 L495.4 891.0 L496.6 891.0 L499.0 898.4 Z" fill="#eab839" fill-opacity="0.3" stroke="#eab839" stroke-width="1.5" stroke-linejoin="round"/>
<path d="M493.0 898.4 L495.4 906.0 L496.6 906.0 L499.0 898.4 Z" fill="#e24d42" fill-opacity="0.3" stroke="#e24d42" stroke-width="1.5" stroke-linejoin="round"/>
<path d="M493.6 898.4 L495.4 903.2 L496.6 903.2 L498.4 898.4 Z" fill="#705da0" fill-opacity="0.3" stroke="#705da0" stroke-width="1.5" stroke-linejoin="round"/>
<path d="M594.5 898.4 L596.9 896.0 L598.1 896.0 L600.5 898.4 Z" fill="#eab839" fill-opacity="0.3" stroke="#eab839" stroke-width="1.5" stroke-linejoin="round"/>
<path d="M594.5 898.4 L596.9 902.0 L598.1 902.0 L600.5 898.4 Z" fill="#705da0" fill-opacity="0.3" stroke="#705da0" stroke-width="1.5" stroke-linejoin="round"/>
<path d="M603.5 898.4 L605.4 896.0 L606.6 896.0 L608.5 898.4 Z" fill="#eab839" fill-opacity="0.3" stroke="#eab839" stroke-width="1.5" stroke-linejoin="round"/>
<path d="M603.5 898.4 L605.4 901.0 L606.6 901.0 L608.5 898.4 Z" fill="#705da0" fill-opacity="0.3" stroke="#705da0" stroke-width="1.5" stroke-linejoin="round"/>
<path d="M627.8 898.4 L630.9 875.0 L631.6 875.0 L634.8 898.4 Z" fill="#eab839" fill-opacity="0.3" stroke="#eab839" stroke-width="1.5" stroke-linejoin="round"/>
<path d="M627.8 898.4 L630.9 920.8 L631.6 920.8 L634.8 898.4 Z" fill="#705da0" fill-opacity="0.3" stroke="#705da0" stroke-width="1.5" stroke-linejoin="round"/>
<path d="M637.0 898.4 L639.4 889.0 L640.6 889.0 L643.0 898.4 Z" fill="#eab839" fill-opacity="0.3" stroke="#eab839" stroke-width="1.5" stroke-linejoin="round"/>
<path d="M637.0 898.4 L639.4 907.0 L640.6 907.0 L643.0 898.4 Z" fill="#e24d42" fill-opacity="0.3" stroke="#e24d42" stroke-width="1.5" stroke-linejoin="round"/>
<path d="M637.6 898.4 L639.4 903.7 L640.6 903.7 L642.4 898.4 Z" fill="#705da0" fill-opacity="0.3" stroke="#705da0" stroke-width="1.5" stroke-linejoin="round"/>
<path d="M652.8 898.4 L655.2 894.0 L656.4 894.0 L658.8 898.4 Z" fill="#eab839" fill-opacity="0.3" stroke="#eab839" stroke-width="1.5" stroke-linejoin="round"/>
<path d="M652.8 898.4 L655.2 903.0 L656.4 903.0 L658.8 898.4 Z" fill="#e24d42" fill-opacity="0.3" stroke="#e24d42" stroke-width="1.5" stroke-linejoin="round"/>
<path d="M653.4 898.4 L655.2 901.7 L656.4 901.7 L658.2 898.4 Z" fill="#705da0" fill-opacity="0.3" stroke="#705da0" stroke-width="1.5" stroke-linejoin="round"/>
<path d="M662.5 898.4 L664.4 896.0 L665.6 896.0 L667.5 898.4 Z" fill="#eab839" fill-opacity="0.3" stroke="#eab839" stroke-width="1.5" stroke-linejoin="round"/>
<path d="M662.5 898.4 L664.4 901.0 L665.6 901.0 L667.5 898.4 Z" fill="#705da0" fill-opacity="0.3" stroke="#705da0" stroke-width="1.5" stroke-linejoin="round"/>
<path d="M671.3 898.4 L673.7 895.0 L674.9 895.0 L677.3 898.4 Z" fill="#eab839" fill-opacity="0.3" stroke="#eab839" stroke-width="1.5" stroke-linejoin="round"/>
<path d="M671.3 898.4 L673.7 902.0 L674.9 902.0 L677.3 898.4 Z" fill="#705da0" fill-opacity="0.3" stroke="#705da0" stroke-width="1.5" stroke-linejoin="round"/>
<path d="M705.0 898.4 L707.4 891.0 L708.6 891.0 L711.0 898.4 Z" fill="#eab839" fill-opacity="0.3" stroke="#eab839" stroke-width="1.5" stroke-linejoin="round"/>
<path d="M705.0 898.4 L707.4 905.0 L708.6 905.0 L711.0 898.4 Z" fill="#e24d42" fill-opacity="0.3" stroke="#e24d42" stroke-width="1.5" stroke-linejoin="round"/>
<path d="M705.6 898.4 L707.4 902.7 L708.6 902.7 L710.4 898.4 Z" fill="#705da0" fill-opacity="0.3" stroke="#705da0" stroke-width="1.5" stroke-linejoin="round"/>
<path d="M797.0 898.4 L799.4 890.0 L800.6 890.0 L803.0 898.4 Z" fill="#eab839" fill-opacity="0.3" stroke="#eab839" stroke-width="1.5" stroke-linejoin="round"/>
<path d="M797.0 898.4 L799.4 907.0 L800.6 907.0 L803.0 898.4 Z" fill="#e24d42" fill-opacity="0.3" stroke="#e24d42" stroke-width="1.5" stroke-linejoin="round"/>
<path d="M797.6 898.4 L799.4 903.7 L800.6 903.7 L802.4 898.4 Z" fill="#705da0" fill-opacity="0.3" stroke="#705da0" stroke-width="1.5" stroke-linejoin="round"/>
<path d="M806.6 898.4 L809.0 895.0 L810.2 895.0 L812.6 898.4 Z" fill="#eab839" fill-opacity="0.3" stroke="#eab839" stroke-width="1.5" stroke-linejoin="round"/>
<path d="M806.6 898.4 L809.0 902.0 L810.2 902.0 L812.6 898.4 Z" fill="#705da0" fill-opacity="0.3" stroke="#705da0" stroke-width="1.5" stroke-linejoin="round"/>
<path d="M822.0 898.4 L824.4 892.0 L825.6 892.0 L828.0 898.4 Z" fill="#eab839" fill-opacity="0.3" stroke="#eab839" stroke-width="1.5" stroke-linejoin="round"/>
<path d="M822.0 898.4 L824.4 903.0 L825.6 903.0 L828.0 898.4 Z" fill="#705da0" fill-opacity="0.3" stroke="#705da0" stroke-width="1.5" stroke-linejoin="round"/>
<path d="M839.9 898.4 L843.0 868.8 L843.8 868.8 L846.9 898.4 Z" fill="#eab839" fill-opacity="0.3" stroke="#eab839" stroke-width="1.5" stroke-linejoin="round"/>
<path d="M839.9 898.4 L843.0 927.0 L843.8 927.0 L846.9 898.4 Z" fill="#e24d42" fill-opacity="0.3" stroke="#e24d42" stroke-width="1.5" stroke-linejoin="round"/>
<path d="M840.6 898.4 L843.0 913.7 L843.8 913.7 L846.2 898.4 Z" fill="#705da0" fill-opacity="0.3" stroke="#705da0" stroke-width="1.5" stroke-linejoin="round"/>
<path d="M856.5 898.4 L858.4 896.0 L859.6 896.0 L861.5 898.4 Z" fill="#eab839" fill-opacity="0.3" stroke="#eab839" stroke-width="1.5" stroke-linejoin="round"/>
<path d="M856.5 898.4 L858.4 901.0 L859.6 901.0 L861.5 898.4 Z" fill="#705da0" fill-opacity="0.3" stroke="#705da0" stroke-width="1.5" stroke-linejoin="round"/>
<path d="M865.0 898.4 L867.4 893.0 L868.6 893.0 L871.0 898.4 Z" fill="#eab839" fill-opacity="0.3" stroke="#eab839" stroke-width="1.5" stroke-linejoin="round"/>
<path d="M865.0 898.4 L867.4 904.0 L868.6 904.0 L871.0 898.4 Z" fill="#e24d42" fill-opacity="0.3" stroke="#e24d42" stroke-width="1.5" stroke-linejoin="round"/>
<path d="M865.6 898.4 L867.4 902.2 L868.6 902.2 L870.4 898.4 Z" fill="#705da0" fill-opacity="0.3" stroke="#705da0" stroke-width="1.5" stroke-linejoin="round"/>
<path d="M875.1 898.4 L877.0 896.0 L878.2 896.0 L880.1 898.4 Z" fill="#eab839" fill-opacity="0.3" stroke="#eab839" stroke-width="1.5" stroke-linejoin="round"/>
<path d="M875.1 898.4 L877.0 901.0 L878.2 901.0 L880.1 898.4 Z" fill="#705da0" fill-opacity="0.3" stroke="#705da0" stroke-width="1.5" stroke-linejoin="round"/>
<line x1="188.6" y1="898.4" x2="1000.2" y2="898.4" stroke="#5e4d84" stroke-width="2.2"/>
<text x="181" y="848.2" font-size="15.2" font-weight="normal" fill="#585d64" text-anchor="end" textLength="62.5" lengthAdjust="spacingAndGlyphs" >500 Mb/s</text>
<text x="181" y="875.9" font-size="15.2" font-weight="normal" fill="#585d64" text-anchor="end" textLength="62.5" lengthAdjust="spacingAndGlyphs" >250 Mb/s</text>
<text x="181" y="903.6" font-size="15.2" font-weight="normal" fill="#585d64" text-anchor="end" textLength="33.0" lengthAdjust="spacingAndGlyphs" >0 b/s</text>
<text x="181" y="931.3" font-size="15.2" font-weight="normal" fill="#585d64" text-anchor="end" textLength="67.6" lengthAdjust="spacingAndGlyphs" >-250 Mb/s</text>
<text x="181" y="959.0" font-size="15.2" font-weight="normal" fill="#585d64" text-anchor="end" textLength="67.6" lengthAdjust="spacingAndGlyphs" >-500 Mb/s</text>
<polygon points="1101,973 1101.00,907.57 1105.24,907.59 1109.48,907.48 1113.71,907.46 1117.95,907.49 1122.19,907.49 1126.43,907.51 1130.66,907.43 1134.90,907.38 1139.14,907.33 1143.38,907.28 1147.61,907.35 1151.85,907.29 1156.09,907.21 1160.33,907.17 1164.57,907.17 1168.80,907.25 1173.04,907.21 1177.28,907.27 1181.52,907.23 1185.75,907.23 1189.99,907.25 1194.23,907.22 1198.47,907.29 1202.70,907.21 1206.94,907.15 1211.18,907.24 1215.42,907.25 1219.66,907.27 1223.89,907.30 1228.13,907.35 1232.37,907.42 1236.61,907.35 1240.84,907.43 1245.08,907.48 1249.32,907.48 1253.56,907.48 1257.79,907.49 1262.03,907.42 1266.27,907.38 1270.51,907.32 1274.75,907.30 1278.98,907.23 1283.22,907.22 1287.46,907.12 1291.70,907.09 1295.93,907.10 1300.17,907.09 1304.41,907.16 1308.65,907.20 1312.88,907.23 1317.12,907.25 1321.36,907.26 1325.60,907.26 1329.84,907.30 1334.07,907.26 1338.31,912.50 1342.55,907.31 1346.79,907.26 1351.02,907.32 1355.26,907.30 1359.50,907.29 1363.74,907.28 1367.97,907.18 1372.21,907.20 1376.45,907.22 1380.69,907.15 1384.93,907.23 1389.16,907.25 1393.40,907.31 1397.64,907.28 1401.88,907.32 1406.11,907.38 1410.35,907.44 1414.59,907.35 1418.83,907.41 1423.06,907.41 1427.30,907.41 1431.54,907.31 1435.78,907.37 1440.02,907.34 1444.25,907.32 1448.49,907.30 1452.73,907.39 1456.97,907.35 1461.20,907.36 1465.44,907.33 1469.68,907.36 1473.92,907.29 1478.15,907.30 1482.39,907.27 1486.63,907.22 1490.87,907.19 1495.11,907.27 1499.34,907.18 1503.58,907.13 1507.82,907.20 1512.06,907.22 1516.29,907.25 1520.53,907.27 1524.77,907.32 1529.01,907.33 1533.24,907.27 1537.48,907.30 1541.72,907.30 1545.96,907.29 1550.19,907.24 1554.43,907.25 1558.67,907.31 1562.91,907.26 1567.15,907.25 1571.38,907.31 1575.62,907.33 1579.86,907.41 1584.10,907.32 1588.33,907.37 1592.57,907.33 1596.81,907.33 1601.05,907.35 1605.28,907.32 1609.52,907.32 1613.76,907.35 1618.00,907.37 1622.24,907.41 1626.47,907.41 1630.71,907.48 1634.95,907.44 1639.19,907.44 1643.42,907.43 1647.66,907.34 1651.90,907.28 1656.14,907.28 1660.37,907.34 1664.61,907.36 1668.85,907.33 1673.09,907.31 1677.33,907.29 1681.56,907.28 1685.80,907.35 1690.04,907.40 1694.28,907.33 1698.51,907.31 1702.75,907.33 1706.99,907.35 1711.23,907.39 1715.46,907.46 1719.70,907.47 1723.94,907.46 1728.18,907.40 1732.42,907.41 1736.65,907.41 1740.89,907.40 1745.13,907.36 1749.37,907.39 1753.60,907.38 1757.84,907.40 1762.08,907.32 1766.32,907.35 1770.55,907.33 1774.79,907.32 1779.03,907.29 1783.27,907.35 1787.51,907.32 1791.74,907.33 1795.98,907.31 1800.22,907.38 1804.46,907.40 1808.69,907.46 1812.93,907.43 1817.17,907.47 1821.41,907.47 1825.64,907.48 1829.88,907.50 1834.12,907.57 1838.36,907.55 1842.60,907.53 1846.83,907.46 1851.07,907.51 1855.31,907.52 1859.55,907.48 1863.78,907.48 1868.02,907.45 1872.26,907.42 1876.50,907.38 1880.73,907.41 1884.97,907.46 1889.21,907.44 1893.45,907.38 1897.69,907.40 1901.92,907.41 1906.16,907.40 1910.40,907.40 1914.64,907.38 1918.87,907.31 1923.11,907.30 1927.35,907.30 1931.59,907.30 1935.82,907.29 1940.06,907.24 1944.30,907.20 1944.3,973" fill="#cbe0c5"/>
<line x1="1145.8" y1="843.3" x2="1145.8" y2="973" stroke="rgba(0,0,0,0.09)" stroke-width="1"/>
<line x1="1286.4" y1="843.3" x2="1286.4" y2="973" stroke="rgba(0,0,0,0.09)" stroke-width="1"/>
<line x1="1427" y1="843.3" x2="1427" y2="973" stroke="rgba(0,0,0,0.09)" stroke-width="1"/>
<line x1="1568.8" y1="843.3" x2="1568.8" y2="973" stroke="rgba(0,0,0,0.09)" stroke-width="1"/>
<line x1="1709.4" y1="843.3" x2="1709.4" y2="973" stroke="rgba(0,0,0,0.09)" stroke-width="1"/>
<line x1="1849.9" y1="843.3" x2="1849.9" y2="973" stroke="rgba(0,0,0,0.09)" stroke-width="1"/>
<line x1="1101" y1="843.3" x2="1944.3" y2="843.3" stroke="rgba(0,0,0,0.09)" stroke-width="1"/>
<line x1="1101" y1="894.6" x2="1944.3" y2="894.6" stroke="rgba(0,0,0,0.09)" stroke-width="1"/>
<line x1="1101" y1="945.9" x2="1944.3" y2="945.9" stroke="rgba(0,0,0,0.09)" stroke-width="1"/>
<polyline points="1101.00,907.57 1105.24,907.59 1109.48,907.48 1113.71,907.46 1117.95,907.49 1122.19,907.49 1126.43,907.51 1130.66,907.43 1134.90,907.38 1139.14,907.33 1143.38,907.28 1147.61,907.35 1151.85,907.29 1156.09,907.21 1160.33,907.17 1164.57,907.17 1168.80,907.25 1173.04,907.21 1177.28,907.27 1181.52,907.23 1185.75,907.23 1189.99,907.25 1194.23,907.22 1198.47,907.29 1202.70,907.21 1206.94,907.15 1211.18,907.24 1215.42,907.25 1219.66,907.27 1223.89,907.30 1228.13,907.35 1232.37,907.42 1236.61,907.35 1240.84,907.43 1245.08,907.48 1249.32,907.48 1253.56,907.48 1257.79,907.49 1262.03,907.42 1266.27,907.38 1270.51,907.32 1274.75,907.30 1278.98,907.23 1283.22,907.22 1287.46,907.12 1291.70,907.09 1295.93,907.10 1300.17,907.09 1304.41,907.16 1308.65,907.20 1312.88,907.23 1317.12,907.25 1321.36,907.26 1325.60,907.26 1329.84,907.30 1334.07,907.26 1338.31,912.50 1342.55,907.31 1346.79,907.26 1351.02,907.32 1355.26,907.30 1359.50,907.29 1363.74,907.28 1367.97,907.18 1372.21,907.20 1376.45,907.22 1380.69,907.15 1384.93,907.23 1389.16,907.25 1393.40,907.31 1397.64,907.28 1401.88,907.32 1406.11,907.38 1410.35,907.44 1414.59,907.35 1418.83,907.41 1423.06,907.41 1427.30,907.41 1431.54,907.31 1435.78,907.37 1440.02,907.34 1444.25,907.32 1448.49,907.30 1452.73,907.39 1456.97,907.35 1461.20,907.36 1465.44,907.33 1469.68,907.36 1473.92,907.29 1478.15,907.30 1482.39,907.27 1486.63,907.22 1490.87,907.19 1495.11,907.27 1499.34,907.18 1503.58,907.13 1507.82,907.20 1512.06,907.22 1516.29,907.25 1520.53,907.27 1524.77,907.32 1529.01,907.33 1533.24,907.27 1537.48,907.30 1541.72,907.30 1545.96,907.29 1550.19,907.24 1554.43,907.25 1558.67,907.31 1562.91,907.26 1567.15,907.25 1571.38,907.31 1575.62,907.33 1579.86,907.41 1584.10,907.32 1588.33,907.37 1592.57,907.33 1596.81,907.33 1601.05,907.35 1605.28,907.32 1609.52,907.32 1613.76,907.35 1618.00,907.37 1622.24,907.41 1626.47,907.41 1630.71,907.48 1634.95,907.44 1639.19,907.44 1643.42,907.43 1647.66,907.34 1651.90,907.28 1656.14,907.28 1660.37,907.34 1664.61,907.36 1668.85,907.33 1673.09,907.31 1677.33,907.29 1681.56,907.28 1685.80,907.35 1690.04,907.40 1694.28,907.33 1698.51,907.31 1702.75,907.33 1706.99,907.35 1711.23,907.39 1715.46,907.46 1719.70,907.47 1723.94,907.46 1728.18,907.40 1732.42,907.41 1736.65,907.41 1740.89,907.40 1745.13,907.36 1749.37,907.39 1753.60,907.38 1757.84,907.40 1762.08,907.32 1766.32,907.35 1770.55,907.33 1774.79,907.32 1779.03,907.29 1783.27,907.35 1787.51,907.32 1791.74,907.33 1795.98,907.31 1800.22,907.38 1804.46,907.40 1808.69,907.46 1812.93,907.43 1817.17,907.47 1821.41,907.47 1825.64,907.48 1829.88,907.50 1834.12,907.57 1838.36,907.55 1842.60,907.53 1846.83,907.46 1851.07,907.51 1855.31,907.52 1859.55,907.48 1863.78,907.48 1868.02,907.45 1872.26,907.42 1876.50,907.38 1880.73,907.41 1884.97,907.46 1889.21,907.44 1893.45,907.38 1897.69,907.40 1901.92,907.41 1906.16,907.40 1910.40,907.40 1914.64,907.38 1918.87,907.31 1923.11,907.30 1927.35,907.30 1931.59,907.30 1935.82,907.29 1940.06,907.24 1944.30,907.20" fill="none" stroke="#7eb26d" stroke-width="1.6"/>
<text x="1094" y="848.5" font-size="15.2" font-weight="normal" fill="#585d64" text-anchor="end" textLength="36.2" lengthAdjust="spacingAndGlyphs" >100%</text>
<text x="1094" y="899.8" font-size="15.2" font-weight="normal" fill="#585d64" text-anchor="end" textLength="28.3" lengthAdjust="spacingAndGlyphs" >75%</text>
<text x="1094" y="951.1" font-size="15.2" font-weight="normal" fill="#585d64" text-anchor="end" textLength="28.3" lengthAdjust="spacingAndGlyphs" >50%</text>
<rect x="0" y="972" width="1999" height="1" fill="#000"/>
</svg></body></html>
